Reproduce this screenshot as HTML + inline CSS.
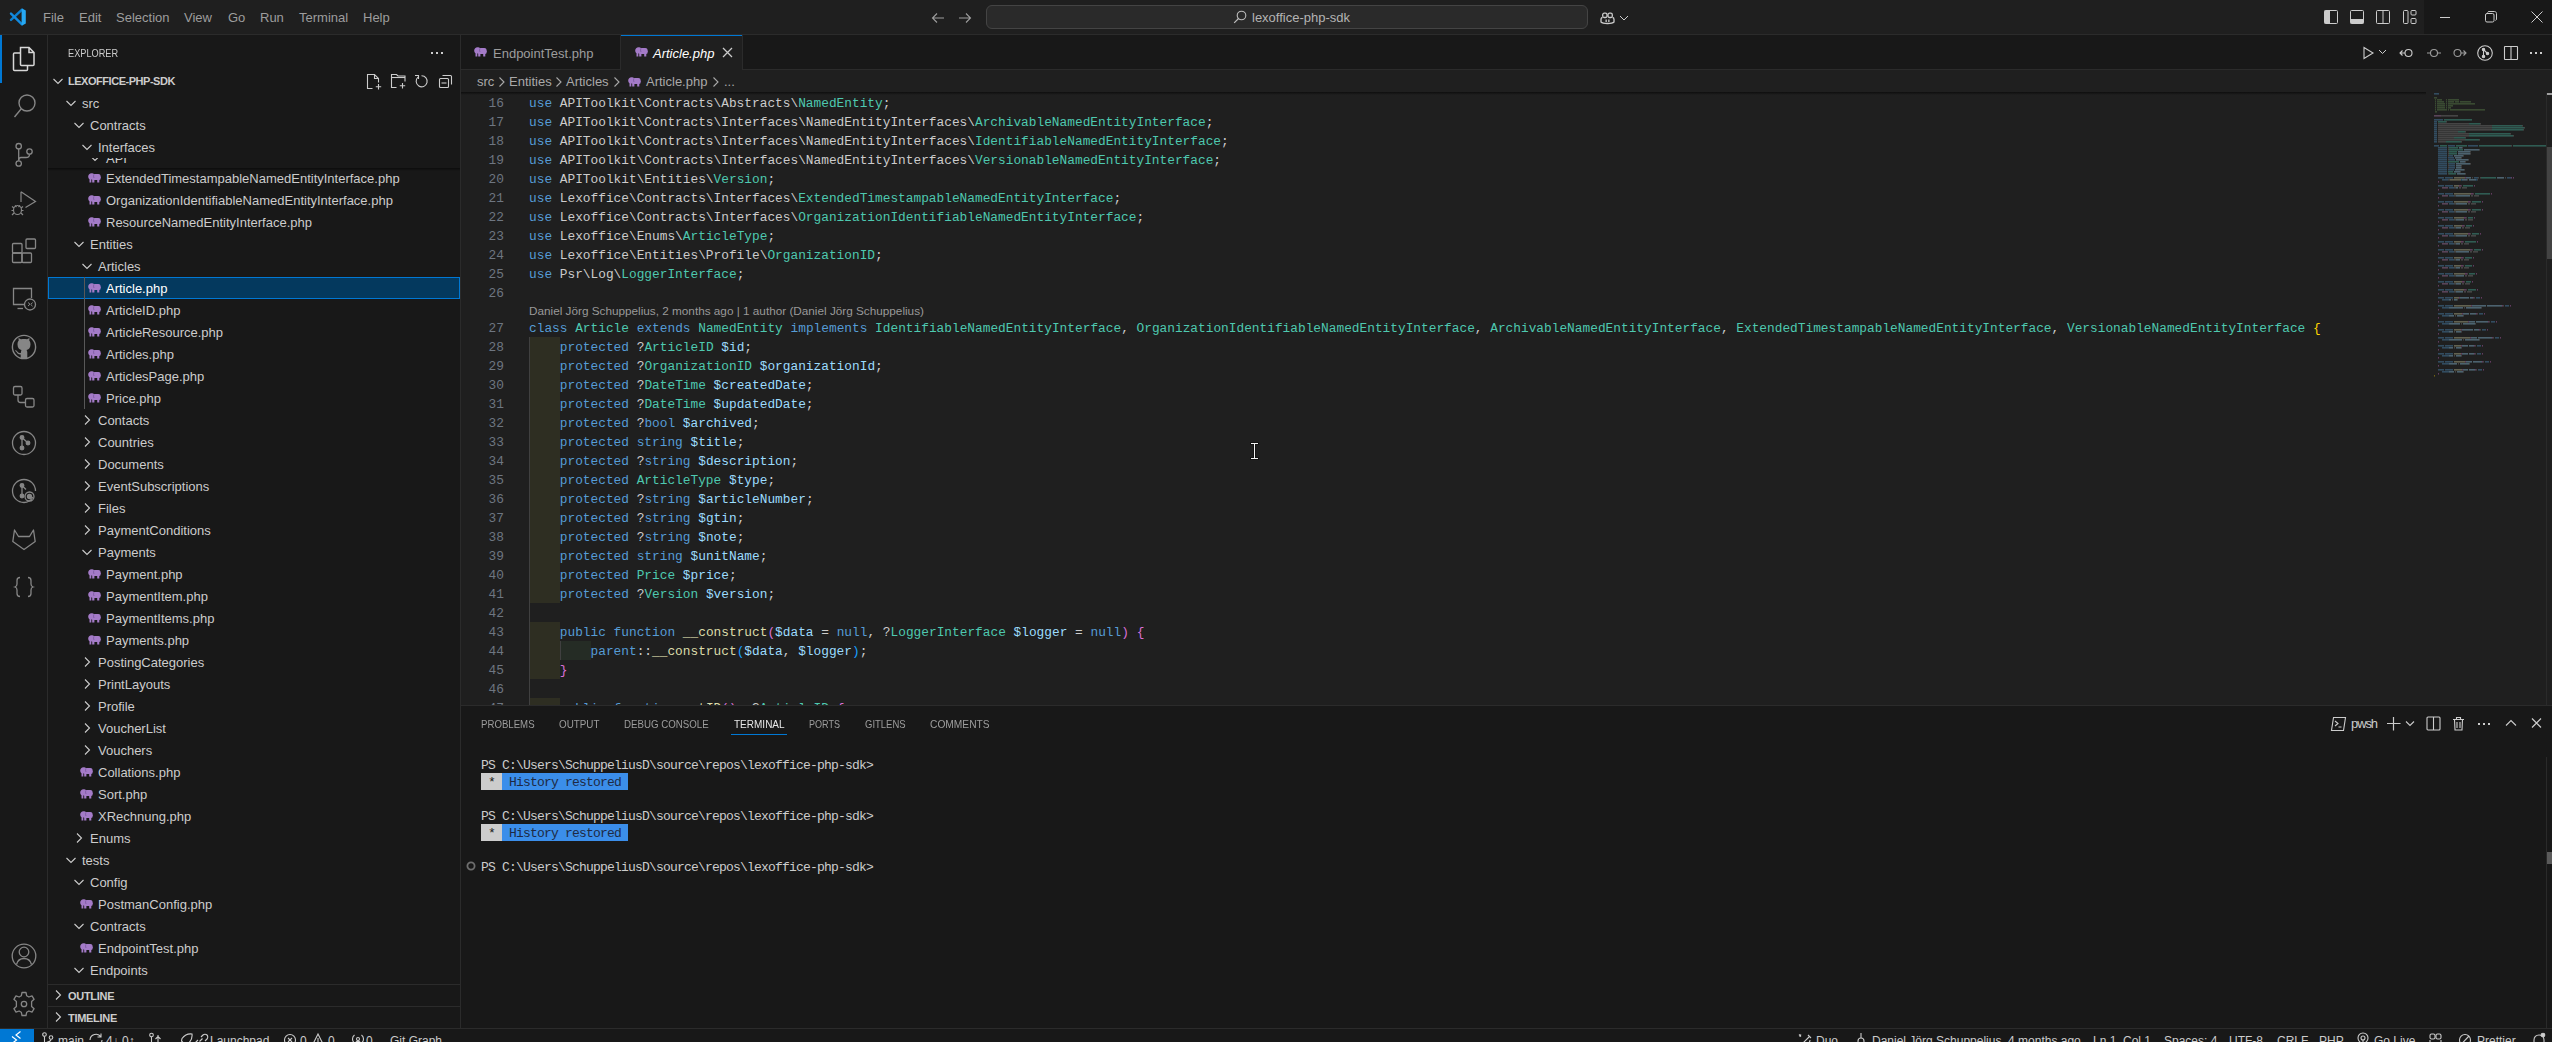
<!DOCTYPE html><html><head><meta charset="utf-8"><title>VS Code</title><style>
*{margin:0;padding:0;box-sizing:border-box}
html,body{width:2552px;height:1042px;overflow:hidden;background:#181818}
body{position:relative;font-family:"Liberation Sans",sans-serif;color:#cccccc;font-size:13px}
.a{position:absolute}
.t{position:absolute;white-space:pre;line-height:22px;height:22px;padding-top:1px}
.code{position:absolute;white-space:pre;font-family:"Liberation Mono",monospace;font-size:12.824px;line-height:19px;height:19px}
.term{position:absolute;white-space:pre;font-family:"Liberation Mono",monospace;font-size:13px;letter-spacing:-0.8003px;line-height:17px;height:17px}
svg{position:absolute;overflow:visible}
</style></head><body>
<div class="a" style="left:0;top:0;width:2424px;height:34px;background:#1f1f1f"></div>
<div class="a" style="left:2424px;top:0;width:128px;height:34px;background:#181818"></div>
<div class="a" style="left:0;top:34px;width:2552px;height:1px;background:#2b2b2b"></div>
<svg style="left:0;top:0" width="40" height="34" viewBox="0 0 40 34"><path d="M22 9.6L11 19.9" stroke="#0c7fcf" stroke-width="2.4" stroke-linecap="round"/><path d="M22 24.4L11 13.6" stroke="#138be0" stroke-width="2.4" stroke-linecap="round"/><path d="M21.6 9.2L22.6 8.8 25.8 10.6V23.6L22.6 25.2 21.6 24.8Z" fill="#26a9f4"/></svg>
<div class="t" style="left:43px;top:6px;color:#9d9d9d;font-size:13px">File</div>
<div class="t" style="left:79px;top:6px;color:#9d9d9d;font-size:13px">Edit</div>
<div class="t" style="left:116px;top:6px;color:#9d9d9d;font-size:13px">Selection</div>
<div class="t" style="left:184px;top:6px;color:#9d9d9d;font-size:13px">View</div>
<div class="t" style="left:228px;top:6px;color:#9d9d9d;font-size:13px">Go</div>
<div class="t" style="left:260px;top:6px;color:#9d9d9d;font-size:13px">Run</div>
<div class="t" style="left:299px;top:6px;color:#9d9d9d;font-size:13px">Terminal</div>
<div class="t" style="left:363px;top:6px;color:#9d9d9d;font-size:13px">Help</div>
<svg style="left:930px;top:10px" width="16" height="16" viewBox="0 0 16 16"><path d="M14 8H2.5M7 3.5L2.5 8 7 12.5" stroke="#9d9d9d" stroke-width="1.1" fill="none"/></svg>
<svg style="left:957px;top:10px" width="16" height="16" viewBox="0 0 16 16"><path d="M2 8H13.5M9 3.5L13.5 8 9 12.5" stroke="#9d9d9d" stroke-width="1.1" fill="none"/></svg>
<div class="a" style="left:986px;top:5px;width:602px;height:24px;background:#2a2a2a;border:1px solid #444444;border-radius:6px"></div>
<svg style="left:1232px;top:9px" width="16" height="16" viewBox="0 0 16 16"><circle cx="9.5" cy="6.5" r="4.3" stroke="#bdbdbd" stroke-width="1.1" fill="none"/><path d="M6.5 9.5L2.2 13.8" stroke="#bdbdbd" stroke-width="1.2"/></svg>
<div class="t" style="left:1252px;top:6px;color:#b4b4b4">lexoffice-php-sdk</div>
<svg style="left:1599px;top:10.5px" width="17" height="16" viewBox="0 0 16 16"><path d="M3 6.5C2 6.5 1.5 7.5 1.5 8.5V11C3.5 13 12.5 13 14.5 11V8.5C14.5 7.5 14 6.5 13 6.5" stroke="#cccccc" stroke-width="1.3" fill="none"/><rect x="3.2" y="2.2" width="4.3" height="4.3" rx="1.5" stroke="#cccccc" stroke-width="1.3" fill="none"/><rect x="8.5" y="2.2" width="4.3" height="4.3" rx="1.5" stroke="#cccccc" stroke-width="1.3" fill="none"/><rect x="6" y="8.5" width="1.3" height="2.5" fill="#cccccc"/><rect x="8.7" y="8.5" width="1.3" height="2.5" fill="#cccccc"/></svg>
<svg style="left:1619px;top:14px" width="10" height="8" viewBox="0 0 10 8"><path d="M1 2L5 6 9 2" stroke="#cccccc" stroke-width="1" fill="none"/></svg>
<svg style="left:2323px;top:9px" width="16" height="16" viewBox="0 0 16 16"><rect x="1.5" y="1.5" width="13" height="13" rx="1" stroke="#cccccc" fill="none"/><rect x="1.5" y="1.5" width="5.5" height="13" fill="#cccccc"/></svg>
<svg style="left:2349px;top:9px" width="16" height="16" viewBox="0 0 16 16"><rect x="1.5" y="1.5" width="13" height="13" rx="1" stroke="#cccccc" fill="none"/><rect x="1.5" y="10" width="13" height="4.5" fill="#cccccc"/></svg>
<svg style="left:2375px;top:9px" width="16" height="16" viewBox="0 0 16 16"><rect x="1.5" y="1.5" width="13" height="13" rx="1" stroke="#cccccc" fill="none"/><path d="M8 1.5V14.5" stroke="#cccccc"/></svg>
<svg style="left:2402px;top:9px" width="16" height="16" viewBox="0 0 16 16"><rect x="1.5" y="1.5" width="4.5" height="13" rx="1" stroke="#cccccc" fill="none"/><rect x="9" y="1.5" width="5" height="4.5" rx="1" stroke="#cccccc" fill="none"/><rect x="9" y="9.5" width="5" height="5" rx="1" stroke="#cccccc" fill="none"/></svg>
<div class="a" style="left:2440px;top:17px;width:10px;height:1px;background:#cccccc"></div>
<svg style="left:2485px;top:11px" width="12" height="12" viewBox="0 0 12 12"><rect x="0.5" y="2.5" width="8.5" height="8.5" rx="1.5" stroke="#cccccc" fill="none"/><path d="M2.5 1.5C2.8 0.8 3.3 0.5 4 0.5H9.5C10.6 0.5 11.5 1.4 11.5 2.5V8C11.5 8.7 11.2 9.2 10.5 9.5" stroke="#cccccc" fill="none"/></svg>
<svg style="left:2531px;top:11px" width="12" height="12" viewBox="0 0 12 12"><path d="M0.5 0.5L11.5 11.5M11.5 0.5L0.5 11.5" stroke="#cccccc" stroke-width="1"/></svg>
<div class="a" style="left:47px;top:35px;width:1px;height:993px;background:#2b2b2b"></div>
<div class="a" style="left:0;top:35px;width:2px;height:48px;background:#0078d4"></div>
<svg style="left:0;top:35px" width="48" height="48" viewBox="0 0 48 48"><g stroke="#d7d7d7" stroke-width="1.5" fill="none"><path d="M20.5 12.5H29L34 17.5V29.5C34 30.1 33.6 30.5 33 30.5H21.5C20.9 30.5 20.5 30.1 20.5 29.5Z M29 12.5V17.5H34"/><path d="M20.5 18H14.5C13.9 18 13.5 18.4 13.5 19V34.5C13.5 35.1 13.9 35.5 14.5 35.5H26.5C27.1 35.5 27.5 35.1 27.5 34.5V30.5"/></g></svg>
<svg style="left:0;top:83px" width="48" height="48" viewBox="0 0 48 48"><g stroke="#868686" stroke-width="1.4" fill="none"><circle cx="27" cy="20" r="8"/><path d="M21.3 25.8L14.5 34"/></g></svg>
<svg style="left:0;top:131px" width="48" height="48" viewBox="0 0 48 48"><g stroke="#868686" stroke-width="1.3" fill="none"><circle cx="18.7" cy="15.2" r="2.7"/><circle cx="29.5" cy="20.5" r="2.7"/><circle cx="18.7" cy="32.5" r="2.7"/><path d="M18.7 18V29.8"/><path d="M29.5 23.2C29.5 25.5 28 26.5 26 26.5H21C19.5 26.5 18.7 27.3 18.7 29"/></g></svg>
<svg style="left:0;top:179px" width="48" height="48" viewBox="0 0 48 48"><g stroke="#868686" stroke-width="1.2" fill="none"><path d="M21 12.8V23M21 12.8L35.5 22.5 25.5 28.5"/><ellipse cx="17.5" cy="31" rx="4" ry="4.5"/><path d="M12 27.5L14 29M23 27.5L21 29M11.5 31.5H13.5M23.5 31.5H21.5M12 36L14 34M23 36L21 34M15 26.5L16.5 28M20 26.5L18.5 28"/></g></svg>
<svg style="left:0;top:227px" width="48" height="48" viewBox="0 0 48 48"><g stroke="#868686" stroke-width="1.3" fill="none"><rect x="12.5" y="16.5" width="9.5" height="9.5" rx="1"/><rect x="12.5" y="26" width="9.5" height="9.5" rx="1"/><rect x="22" y="26" width="9.5" height="9.5" rx="1"/><rect x="26" y="12" width="9.5" height="9.5" rx="1"/></g></svg>
<svg style="left:0;top:275px" width="48" height="48" viewBox="0 0 48 48"><g stroke="#868686" stroke-width="1.3" fill="none"><path d="M31.5 23V13.5H13.5V29.5H25"/><path d="M17.5 33.5H23"/><circle cx="30" cy="29.5" r="5.5"/><path d="M28 27.5L30 29.2 28 31M32.5 27.5L30.8 29.5 32.5 31.2" stroke-width="1"/></g></svg>
<svg style="left:0;top:323px" width="48" height="48" viewBox="0 0 48 48"><g stroke="#868686" stroke-width="1.4" fill="none"><circle cx="24" cy="24" r="11.6"/></g><path d="M17.5 21.5C17.5 19.5 18 18.5 18.7 17.8L18.5 15 21 16.3C23 15.8 25 15.8 27 16.3L29.5 15 29.3 17.8C30 18.5 30.5 19.5 30.5 21.5C30.5 25 28.5 26.5 26.5 27C27 27.6 27.3 28.5 27.3 29.5V35.3C25.3 35.8 22.7 35.8 20.7 35.3V31.5C18.5 31.8 17.3 30.5 16.5 29C16 28.2 15.5 28 15 28L15.3 27.3C16.5 27.3 17.2 28.3 17.8 29.1C18.5 30 19.5 30.3 20.8 29.9C21 29 21.2 27.6 21.5 27C19.5 26.5 17.5 25 17.5 21.5Z" fill="#868686"/></svg>
<svg style="left:0;top:371px" width="48" height="48" viewBox="0 0 48 48"><g stroke="#868686" stroke-width="1.3" fill="none"><rect x="13.5" y="15.5" width="8.5" height="8.5" rx="1.5"/><rect x="25.5" y="27.5" width="8.5" height="8.5" rx="1.5"/><path d="M18 24V29C18 30.5 19 31.5 20.5 31.5H25.5"/></g></svg>
<svg style="left:0;top:419px" width="48" height="48" viewBox="0 0 48 48"><g stroke="#868686" stroke-width="1.3" fill="none"><circle cx="24" cy="24" r="11.5"/><circle cx="22" cy="18.5" r="1.8" fill="#868686"/><circle cx="28" cy="24" r="1.8" fill="#868686"/><circle cx="22" cy="29" r="1.8" fill="#868686"/><path d="M22 18.5V29M22 18.5L28 24"/></g></svg>
<svg style="left:0;top:467px" width="48" height="48" viewBox="0 0 48 48"><g stroke="#868686" stroke-width="1.3" fill="none"><path d="M33 30C31 33.5 27.5 35.5 24 35.5C17.6 35.5 12.5 30.4 12.5 24S17.6 12.5 24 12.5C30.4 12.5 35.5 17.6 35.5 24"/><circle cx="22" cy="18.5" r="1.8" fill="#868686"/><circle cx="22" cy="29" r="1.8" fill="#868686"/><path d="M22 18.5V29M22 18.5L26 22.5"/><circle cx="29.5" cy="29.5" r="4.5"/><circle cx="29.5" cy="29.5" r="2" fill="#868686"/></g></svg>
<svg style="left:0;top:515px" width="48" height="48" viewBox="0 0 48 48"><g stroke="#868686" stroke-width="1.3" fill="none"><path d="M24 34.5L12.8 26.5L14.5 15L18.5 21.5H29.5L33.5 15L35.2 26.5Z" stroke-linejoin="round"/></g></svg>
<svg style="left:0;top:563px" width="48" height="48" viewBox="0 0 48 48"><g stroke="#868686" stroke-width="1.3" fill="none"><path d="M20 14.5C17.5 14.5 17 15.5 17 17.5V21C17 22.5 16.5 23.5 15 24C16.5 24.5 17 25.5 17 27V30.5C17 32.5 17.5 33.5 20 33.5"/><path d="M28 14.5C30.5 14.5 31 15.5 31 17.5V21C31 22.5 31.5 23.5 33 24C31.5 24.5 31 25.5 31 27V30.5C31 32.5 30.5 33.5 28 33.5"/></g></svg>
<svg style="left:0;top:932px" width="48" height="48" viewBox="0 0 48 48"><g stroke="#868686" stroke-width="1.3" fill="none"><circle cx="24" cy="24" r="11.8"/><circle cx="24" cy="20" r="4.8"/><path d="M16.5 32.5C17.5 28.5 20.5 26.5 24 26.5S30.5 28.5 31.5 32.5"/></g></svg>
<svg style="left:0;top:980px" width="48" height="48" viewBox="0 0 48 48"><g stroke="#868686" stroke-width="1.3" fill="none"><path d="M22 12.5H26L26.7 15.8 28.9 17 32 15.8 34.1 19.3 31.6 21.6V26.4L34.1 28.7 32 32.2 28.9 31 26.7 32.2 26 35.5H22L21.3 32.2 19.1 31 16 32.2 13.9 28.7 16.4 26.4V21.6L13.9 19.3 16 15.8 19.1 17 21.3 15.8Z" stroke-linejoin="round"/><circle cx="24" cy="24" r="2.7"/></g></svg>
<div class="a" style="left:460px;top:35px;width:1px;height:993px;background:#2b2b2b"></div>
<div class="t" style="left:68px;top:41px;font-size:11px;color:#cccccc;transform:scaleX(0.835);transform-origin:0 0">EXPLORER</div>
<div class="a" style="left:431px;top:52px;width:2px;height:2px;background:#cccccc"></div>
<div class="a" style="left:436px;top:52px;width:2px;height:2px;background:#cccccc"></div>
<div class="a" style="left:441px;top:52px;width:2px;height:2px;background:#cccccc"></div>
<svg style="left:50px;top:73px" width="16" height="16" viewBox="0 0 16 16"><path d="M3.5 6L8 10.5 12.5 6" stroke="#cccccc" stroke-width="1.1" fill="none"/></svg>
<div class="t" style="left:68px;top:69px;font-size:11px;font-weight:bold;letter-spacing:-0.47px">LEXOFFICE-PHP-SDK</div>
<svg style="left:366px;top:73px" width="17" height="17" viewBox="0 0 17 17"><g stroke="#cccccc" stroke-width="1.1" fill="none"><path d="M6.5 15.5H1.5V1.5H8.5L12.5 5.5V9.5M8.5 1.5V5.5H12.5"/><path d="M12.5 11V16.5M9.8 13.7H15.2"/></g></svg>
<svg style="left:390px;top:73px" width="17" height="17" viewBox="0 0 17 17"><g stroke="#cccccc" stroke-width="1.1" fill="none"><path d="M6.5 14.5H1.5V1.5H6.5L8 3H15V8.5"/><path d="M1.5 4.5H15"/><path d="M12.5 10V15.5M9.8 12.7H15.2"/></g></svg>
<svg style="left:414px;top:74px" width="15" height="15" viewBox="0 0 15 15"><g stroke="#cccccc" stroke-width="1.1" fill="none"><path d="M4 3.2A5.5 5.5 0 1 0 7.5 1.8"/><path d="M1 1.5H4.5V5"/></g></svg>
<svg style="left:438px;top:74px" width="15" height="15" viewBox="0 0 15 15"><g stroke="#cccccc" stroke-width="1.1" fill="none"><rect x="1.5" y="4.5" width="9" height="9" rx="1"/><path d="M4.5 1.5H12.5C13.1 1.5 13.5 1.9 13.5 2.5V10.5"/><path d="M3.5 9H8.5"/></g></svg>
<div class="a" style="left:48px;top:92px;width:412px;height:892px;overflow:hidden">
<div class="a" style="left:-48px;top:-92px;width:2552px;height:1042px"><svg style="left:88px;top:173px" width="13" height="10" viewBox="0 0 13 10"><path fill="#a47bc8" d="M1.5 9.4V6.2C0.6 5.6 0.2 4.6 0.2 3.5C0.2 1.5 1.7 0.2 3.5 0.2C4.7 0.2 5.5 0.6 6 1.1H10.4C11.7 1.1 12.5 2 12.6 3.2L13 4.6 12.6 4.9V6C12.6 6.5 12 6.8 11.3 6.9V9.4H9.2V7.1H6.4V9.4H4.2V6.7L3.3 6.3V9.4Z"/><path d="M6 1.3C5.4 2.6 5.4 4 6.1 5" stroke="#6f4f93" stroke-width="0.7" fill="none"/></svg><div class="t" style="left:106px;top:167px;color:#cccccc">ExtendedTimestampableNamedEntityInterface.php</div><svg style="left:88px;top:195px" width="13" height="10" viewBox="0 0 13 10"><path fill="#a47bc8" d="M1.5 9.4V6.2C0.6 5.6 0.2 4.6 0.2 3.5C0.2 1.5 1.7 0.2 3.5 0.2C4.7 0.2 5.5 0.6 6 1.1H10.4C11.7 1.1 12.5 2 12.6 3.2L13 4.6 12.6 4.9V6C12.6 6.5 12 6.8 11.3 6.9V9.4H9.2V7.1H6.4V9.4H4.2V6.7L3.3 6.3V9.4Z"/><path d="M6 1.3C5.4 2.6 5.4 4 6.1 5" stroke="#6f4f93" stroke-width="0.7" fill="none"/></svg><div class="t" style="left:106px;top:189px;color:#cccccc">OrganizationIdentifiableNamedEntityInterface.php</div><svg style="left:88px;top:217px" width="13" height="10" viewBox="0 0 13 10"><path fill="#a47bc8" d="M1.5 9.4V6.2C0.6 5.6 0.2 4.6 0.2 3.5C0.2 1.5 1.7 0.2 3.5 0.2C4.7 0.2 5.5 0.6 6 1.1H10.4C11.7 1.1 12.5 2 12.6 3.2L13 4.6 12.6 4.9V6C12.6 6.5 12 6.8 11.3 6.9V9.4H9.2V7.1H6.4V9.4H4.2V6.7L3.3 6.3V9.4Z"/><path d="M6 1.3C5.4 2.6 5.4 4 6.1 5" stroke="#6f4f93" stroke-width="0.7" fill="none"/></svg><div class="t" style="left:106px;top:211px;color:#cccccc">ResourceNamedEntityInterface.php</div><svg style="left:71px;top:236px" width="16" height="16" viewBox="0 0 16 16"><path d="M3.5 6L8 10.5 12.5 6" stroke="#cccccc" stroke-width="1.1" fill="none"/></svg><div class="t" style="left:90px;top:233px;color:#cccccc">Entities</div><svg style="left:79px;top:258px" width="16" height="16" viewBox="0 0 16 16"><path d="M3.5 6L8 10.5 12.5 6" stroke="#cccccc" stroke-width="1.1" fill="none"/></svg><div class="t" style="left:98px;top:255px;color:#cccccc">Articles</div><div class="a" style="left:48px;top:277px;width:412px;height:22px;background:#04395e;border:1px solid #0078d4"></div><svg style="left:88px;top:283px" width="13" height="10" viewBox="0 0 13 10"><path fill="#a47bc8" d="M1.5 9.4V6.2C0.6 5.6 0.2 4.6 0.2 3.5C0.2 1.5 1.7 0.2 3.5 0.2C4.7 0.2 5.5 0.6 6 1.1H10.4C11.7 1.1 12.5 2 12.6 3.2L13 4.6 12.6 4.9V6C12.6 6.5 12 6.8 11.3 6.9V9.4H9.2V7.1H6.4V9.4H4.2V6.7L3.3 6.3V9.4Z"/><path d="M6 1.3C5.4 2.6 5.4 4 6.1 5" stroke="#6f4f93" stroke-width="0.7" fill="none"/></svg><div class="t" style="left:106px;top:277px;color:#ffffff">Article.php</div><svg style="left:88px;top:305px" width="13" height="10" viewBox="0 0 13 10"><path fill="#a47bc8" d="M1.5 9.4V6.2C0.6 5.6 0.2 4.6 0.2 3.5C0.2 1.5 1.7 0.2 3.5 0.2C4.7 0.2 5.5 0.6 6 1.1H10.4C11.7 1.1 12.5 2 12.6 3.2L13 4.6 12.6 4.9V6C12.6 6.5 12 6.8 11.3 6.9V9.4H9.2V7.1H6.4V9.4H4.2V6.7L3.3 6.3V9.4Z"/><path d="M6 1.3C5.4 2.6 5.4 4 6.1 5" stroke="#6f4f93" stroke-width="0.7" fill="none"/></svg><div class="t" style="left:106px;top:299px;color:#cccccc">ArticleID.php</div><svg style="left:88px;top:327px" width="13" height="10" viewBox="0 0 13 10"><path fill="#a47bc8" d="M1.5 9.4V6.2C0.6 5.6 0.2 4.6 0.2 3.5C0.2 1.5 1.7 0.2 3.5 0.2C4.7 0.2 5.5 0.6 6 1.1H10.4C11.7 1.1 12.5 2 12.6 3.2L13 4.6 12.6 4.9V6C12.6 6.5 12 6.8 11.3 6.9V9.4H9.2V7.1H6.4V9.4H4.2V6.7L3.3 6.3V9.4Z"/><path d="M6 1.3C5.4 2.6 5.4 4 6.1 5" stroke="#6f4f93" stroke-width="0.7" fill="none"/></svg><div class="t" style="left:106px;top:321px;color:#cccccc">ArticleResource.php</div><svg style="left:88px;top:349px" width="13" height="10" viewBox="0 0 13 10"><path fill="#a47bc8" d="M1.5 9.4V6.2C0.6 5.6 0.2 4.6 0.2 3.5C0.2 1.5 1.7 0.2 3.5 0.2C4.7 0.2 5.5 0.6 6 1.1H10.4C11.7 1.1 12.5 2 12.6 3.2L13 4.6 12.6 4.9V6C12.6 6.5 12 6.8 11.3 6.9V9.4H9.2V7.1H6.4V9.4H4.2V6.7L3.3 6.3V9.4Z"/><path d="M6 1.3C5.4 2.6 5.4 4 6.1 5" stroke="#6f4f93" stroke-width="0.7" fill="none"/></svg><div class="t" style="left:106px;top:343px;color:#cccccc">Articles.php</div><svg style="left:88px;top:371px" width="13" height="10" viewBox="0 0 13 10"><path fill="#a47bc8" d="M1.5 9.4V6.2C0.6 5.6 0.2 4.6 0.2 3.5C0.2 1.5 1.7 0.2 3.5 0.2C4.7 0.2 5.5 0.6 6 1.1H10.4C11.7 1.1 12.5 2 12.6 3.2L13 4.6 12.6 4.9V6C12.6 6.5 12 6.8 11.3 6.9V9.4H9.2V7.1H6.4V9.4H4.2V6.7L3.3 6.3V9.4Z"/><path d="M6 1.3C5.4 2.6 5.4 4 6.1 5" stroke="#6f4f93" stroke-width="0.7" fill="none"/></svg><div class="t" style="left:106px;top:365px;color:#cccccc">ArticlesPage.php</div><svg style="left:88px;top:393px" width="13" height="10" viewBox="0 0 13 10"><path fill="#a47bc8" d="M1.5 9.4V6.2C0.6 5.6 0.2 4.6 0.2 3.5C0.2 1.5 1.7 0.2 3.5 0.2C4.7 0.2 5.5 0.6 6 1.1H10.4C11.7 1.1 12.5 2 12.6 3.2L13 4.6 12.6 4.9V6C12.6 6.5 12 6.8 11.3 6.9V9.4H9.2V7.1H6.4V9.4H4.2V6.7L3.3 6.3V9.4Z"/><path d="M6 1.3C5.4 2.6 5.4 4 6.1 5" stroke="#6f4f93" stroke-width="0.7" fill="none"/></svg><div class="t" style="left:106px;top:387px;color:#cccccc">Price.php</div><svg style="left:79px;top:412px" width="16" height="16" viewBox="0 0 16 16"><path d="M6 3.5L10.5 8 6 12.5" stroke="#cccccc" stroke-width="1.1" fill="none"/></svg><div class="t" style="left:98px;top:409px;color:#cccccc">Contacts</div><svg style="left:79px;top:434px" width="16" height="16" viewBox="0 0 16 16"><path d="M6 3.5L10.5 8 6 12.5" stroke="#cccccc" stroke-width="1.1" fill="none"/></svg><div class="t" style="left:98px;top:431px;color:#cccccc">Countries</div><svg style="left:79px;top:456px" width="16" height="16" viewBox="0 0 16 16"><path d="M6 3.5L10.5 8 6 12.5" stroke="#cccccc" stroke-width="1.1" fill="none"/></svg><div class="t" style="left:98px;top:453px;color:#cccccc">Documents</div><svg style="left:79px;top:478px" width="16" height="16" viewBox="0 0 16 16"><path d="M6 3.5L10.5 8 6 12.5" stroke="#cccccc" stroke-width="1.1" fill="none"/></svg><div class="t" style="left:98px;top:475px;color:#cccccc">EventSubscriptions</div><svg style="left:79px;top:500px" width="16" height="16" viewBox="0 0 16 16"><path d="M6 3.5L10.5 8 6 12.5" stroke="#cccccc" stroke-width="1.1" fill="none"/></svg><div class="t" style="left:98px;top:497px;color:#cccccc">Files</div><svg style="left:79px;top:522px" width="16" height="16" viewBox="0 0 16 16"><path d="M6 3.5L10.5 8 6 12.5" stroke="#cccccc" stroke-width="1.1" fill="none"/></svg><div class="t" style="left:98px;top:519px;color:#cccccc">PaymentConditions</div><svg style="left:79px;top:544px" width="16" height="16" viewBox="0 0 16 16"><path d="M3.5 6L8 10.5 12.5 6" stroke="#cccccc" stroke-width="1.1" fill="none"/></svg><div class="t" style="left:98px;top:541px;color:#cccccc">Payments</div><svg style="left:88px;top:569px" width="13" height="10" viewBox="0 0 13 10"><path fill="#a47bc8" d="M1.5 9.4V6.2C0.6 5.6 0.2 4.6 0.2 3.5C0.2 1.5 1.7 0.2 3.5 0.2C4.7 0.2 5.5 0.6 6 1.1H10.4C11.7 1.1 12.5 2 12.6 3.2L13 4.6 12.6 4.9V6C12.6 6.5 12 6.8 11.3 6.9V9.4H9.2V7.1H6.4V9.4H4.2V6.7L3.3 6.3V9.4Z"/><path d="M6 1.3C5.4 2.6 5.4 4 6.1 5" stroke="#6f4f93" stroke-width="0.7" fill="none"/></svg><div class="t" style="left:106px;top:563px;color:#cccccc">Payment.php</div><svg style="left:88px;top:591px" width="13" height="10" viewBox="0 0 13 10"><path fill="#a47bc8" d="M1.5 9.4V6.2C0.6 5.6 0.2 4.6 0.2 3.5C0.2 1.5 1.7 0.2 3.5 0.2C4.7 0.2 5.5 0.6 6 1.1H10.4C11.7 1.1 12.5 2 12.6 3.2L13 4.6 12.6 4.9V6C12.6 6.5 12 6.8 11.3 6.9V9.4H9.2V7.1H6.4V9.4H4.2V6.7L3.3 6.3V9.4Z"/><path d="M6 1.3C5.4 2.6 5.4 4 6.1 5" stroke="#6f4f93" stroke-width="0.7" fill="none"/></svg><div class="t" style="left:106px;top:585px;color:#cccccc">PaymentItem.php</div><svg style="left:88px;top:613px" width="13" height="10" viewBox="0 0 13 10"><path fill="#a47bc8" d="M1.5 9.4V6.2C0.6 5.6 0.2 4.6 0.2 3.5C0.2 1.5 1.7 0.2 3.5 0.2C4.7 0.2 5.5 0.6 6 1.1H10.4C11.7 1.1 12.5 2 12.6 3.2L13 4.6 12.6 4.9V6C12.6 6.5 12 6.8 11.3 6.9V9.4H9.2V7.1H6.4V9.4H4.2V6.7L3.3 6.3V9.4Z"/><path d="M6 1.3C5.4 2.6 5.4 4 6.1 5" stroke="#6f4f93" stroke-width="0.7" fill="none"/></svg><div class="t" style="left:106px;top:607px;color:#cccccc">PaymentItems.php</div><svg style="left:88px;top:635px" width="13" height="10" viewBox="0 0 13 10"><path fill="#a47bc8" d="M1.5 9.4V6.2C0.6 5.6 0.2 4.6 0.2 3.5C0.2 1.5 1.7 0.2 3.5 0.2C4.7 0.2 5.5 0.6 6 1.1H10.4C11.7 1.1 12.5 2 12.6 3.2L13 4.6 12.6 4.9V6C12.6 6.5 12 6.8 11.3 6.9V9.4H9.2V7.1H6.4V9.4H4.2V6.7L3.3 6.3V9.4Z"/><path d="M6 1.3C5.4 2.6 5.4 4 6.1 5" stroke="#6f4f93" stroke-width="0.7" fill="none"/></svg><div class="t" style="left:106px;top:629px;color:#cccccc">Payments.php</div><svg style="left:79px;top:654px" width="16" height="16" viewBox="0 0 16 16"><path d="M6 3.5L10.5 8 6 12.5" stroke="#cccccc" stroke-width="1.1" fill="none"/></svg><div class="t" style="left:98px;top:651px;color:#cccccc">PostingCategories</div><svg style="left:79px;top:676px" width="16" height="16" viewBox="0 0 16 16"><path d="M6 3.5L10.5 8 6 12.5" stroke="#cccccc" stroke-width="1.1" fill="none"/></svg><div class="t" style="left:98px;top:673px;color:#cccccc">PrintLayouts</div><svg style="left:79px;top:698px" width="16" height="16" viewBox="0 0 16 16"><path d="M6 3.5L10.5 8 6 12.5" stroke="#cccccc" stroke-width="1.1" fill="none"/></svg><div class="t" style="left:98px;top:695px;color:#cccccc">Profile</div><svg style="left:79px;top:720px" width="16" height="16" viewBox="0 0 16 16"><path d="M6 3.5L10.5 8 6 12.5" stroke="#cccccc" stroke-width="1.1" fill="none"/></svg><div class="t" style="left:98px;top:717px;color:#cccccc">VoucherList</div><svg style="left:79px;top:742px" width="16" height="16" viewBox="0 0 16 16"><path d="M6 3.5L10.5 8 6 12.5" stroke="#cccccc" stroke-width="1.1" fill="none"/></svg><div class="t" style="left:98px;top:739px;color:#cccccc">Vouchers</div><svg style="left:80px;top:767px" width="13" height="10" viewBox="0 0 13 10"><path fill="#a47bc8" d="M1.5 9.4V6.2C0.6 5.6 0.2 4.6 0.2 3.5C0.2 1.5 1.7 0.2 3.5 0.2C4.7 0.2 5.5 0.6 6 1.1H10.4C11.7 1.1 12.5 2 12.6 3.2L13 4.6 12.6 4.9V6C12.6 6.5 12 6.8 11.3 6.9V9.4H9.2V7.1H6.4V9.4H4.2V6.7L3.3 6.3V9.4Z"/><path d="M6 1.3C5.4 2.6 5.4 4 6.1 5" stroke="#6f4f93" stroke-width="0.7" fill="none"/></svg><div class="t" style="left:98px;top:761px;color:#cccccc">Collations.php</div><svg style="left:80px;top:789px" width="13" height="10" viewBox="0 0 13 10"><path fill="#a47bc8" d="M1.5 9.4V6.2C0.6 5.6 0.2 4.6 0.2 3.5C0.2 1.5 1.7 0.2 3.5 0.2C4.7 0.2 5.5 0.6 6 1.1H10.4C11.7 1.1 12.5 2 12.6 3.2L13 4.6 12.6 4.9V6C12.6 6.5 12 6.8 11.3 6.9V9.4H9.2V7.1H6.4V9.4H4.2V6.7L3.3 6.3V9.4Z"/><path d="M6 1.3C5.4 2.6 5.4 4 6.1 5" stroke="#6f4f93" stroke-width="0.7" fill="none"/></svg><div class="t" style="left:98px;top:783px;color:#cccccc">Sort.php</div><svg style="left:80px;top:811px" width="13" height="10" viewBox="0 0 13 10"><path fill="#a47bc8" d="M1.5 9.4V6.2C0.6 5.6 0.2 4.6 0.2 3.5C0.2 1.5 1.7 0.2 3.5 0.2C4.7 0.2 5.5 0.6 6 1.1H10.4C11.7 1.1 12.5 2 12.6 3.2L13 4.6 12.6 4.9V6C12.6 6.5 12 6.8 11.3 6.9V9.4H9.2V7.1H6.4V9.4H4.2V6.7L3.3 6.3V9.4Z"/><path d="M6 1.3C5.4 2.6 5.4 4 6.1 5" stroke="#6f4f93" stroke-width="0.7" fill="none"/></svg><div class="t" style="left:98px;top:805px;color:#cccccc">XRechnung.php</div><svg style="left:71px;top:830px" width="16" height="16" viewBox="0 0 16 16"><path d="M6 3.5L10.5 8 6 12.5" stroke="#cccccc" stroke-width="1.1" fill="none"/></svg><div class="t" style="left:90px;top:827px;color:#cccccc">Enums</div><svg style="left:63px;top:852px" width="16" height="16" viewBox="0 0 16 16"><path d="M3.5 6L8 10.5 12.5 6" stroke="#cccccc" stroke-width="1.1" fill="none"/></svg><div class="t" style="left:82px;top:849px;color:#cccccc">tests</div><svg style="left:71px;top:874px" width="16" height="16" viewBox="0 0 16 16"><path d="M3.5 6L8 10.5 12.5 6" stroke="#cccccc" stroke-width="1.1" fill="none"/></svg><div class="t" style="left:90px;top:871px;color:#cccccc">Config</div><svg style="left:80px;top:899px" width="13" height="10" viewBox="0 0 13 10"><path fill="#a47bc8" d="M1.5 9.4V6.2C0.6 5.6 0.2 4.6 0.2 3.5C0.2 1.5 1.7 0.2 3.5 0.2C4.7 0.2 5.5 0.6 6 1.1H10.4C11.7 1.1 12.5 2 12.6 3.2L13 4.6 12.6 4.9V6C12.6 6.5 12 6.8 11.3 6.9V9.4H9.2V7.1H6.4V9.4H4.2V6.7L3.3 6.3V9.4Z"/><path d="M6 1.3C5.4 2.6 5.4 4 6.1 5" stroke="#6f4f93" stroke-width="0.7" fill="none"/></svg><div class="t" style="left:98px;top:893px;color:#cccccc">PostmanConfig.php</div><svg style="left:71px;top:918px" width="16" height="16" viewBox="0 0 16 16"><path d="M3.5 6L8 10.5 12.5 6" stroke="#cccccc" stroke-width="1.1" fill="none"/></svg><div class="t" style="left:90px;top:915px;color:#cccccc">Contracts</div><svg style="left:80px;top:943px" width="13" height="10" viewBox="0 0 13 10"><path fill="#a47bc8" d="M1.5 9.4V6.2C0.6 5.6 0.2 4.6 0.2 3.5C0.2 1.5 1.7 0.2 3.5 0.2C4.7 0.2 5.5 0.6 6 1.1H10.4C11.7 1.1 12.5 2 12.6 3.2L13 4.6 12.6 4.9V6C12.6 6.5 12 6.8 11.3 6.9V9.4H9.2V7.1H6.4V9.4H4.2V6.7L3.3 6.3V9.4Z"/><path d="M6 1.3C5.4 2.6 5.4 4 6.1 5" stroke="#6f4f93" stroke-width="0.7" fill="none"/></svg><div class="t" style="left:98px;top:937px;color:#cccccc">EndpointTest.php</div><svg style="left:71px;top:962px" width="16" height="16" viewBox="0 0 16 16"><path d="M3.5 6L8 10.5 12.5 6" stroke="#cccccc" stroke-width="1.1" fill="none"/></svg><div class="t" style="left:90px;top:959px;color:#cccccc">Endpoints</div>
<div class="a" style="left:84px;top:277px;width:1px;height:132px;background:#585858"></div>
<div class="a" style="left:48px;top:92px;width:412px;height:76px;background:#181818"></div>
<svg style="left:63px;top:95px" width="16" height="16" viewBox="0 0 16 16"><path d="M3.5 6L8 10.5 12.5 6" stroke="#cccccc" stroke-width="1.1" fill="none"/></svg><div class="t" style="left:82px;top:92px;color:#cccccc">src</div>
<svg style="left:71px;top:117px" width="16" height="16" viewBox="0 0 16 16"><path d="M3.5 6L8 10.5 12.5 6" stroke="#cccccc" stroke-width="1.1" fill="none"/></svg><div class="t" style="left:90px;top:114px;color:#cccccc">Contracts</div>
<svg style="left:79px;top:139px" width="16" height="16" viewBox="0 0 16 16"><path d="M3.5 6L8 10.5 12.5 6" stroke="#cccccc" stroke-width="1.1" fill="none"/></svg><div class="t" style="left:98px;top:136px;color:#cccccc">Interfaces</div>
<div class="a" style="left:0;top:157.5px;width:2552px;height:5px;overflow:hidden"><div class="a" style="left:0;top:-157.5px;width:2552px;height:400px"><svg style="left:87px;top:149.5px" width="16" height="16" viewBox="0 0 16 16"><path d="M3.5 6L8 10.5 12.5 6" stroke="#cccccc" stroke-width="1.1" fill="none"/></svg><div class="t" style="left:106px;top:146.5px;color:#cccccc">API</div></div></div>
</div>
<div class="a" style="left:0;top:76px;width:412px;height:3px;background:linear-gradient(#0c0c0c,rgba(24,24,24,0))"></div>
</div>
<div class="a" style="left:48px;top:984px;width:412px;height:1px;background:#2b2b2b"></div>
<div class="a" style="left:48px;top:1006px;width:412px;height:1px;background:#2b2b2b"></div>
<svg style="left:50px;top:987px" width="16" height="16" viewBox="0 0 16 16"><path d="M6 3.5L10.5 8 6 12.5" stroke="#cccccc" stroke-width="1.1" fill="none"/></svg>
<div class="t" style="left:68px;top:984px;font-size:11px;font-weight:bold;letter-spacing:-0.3px">OUTLINE</div>
<svg style="left:50px;top:1009px" width="16" height="16" viewBox="0 0 16 16"><path d="M6 3.5L10.5 8 6 12.5" stroke="#cccccc" stroke-width="1.1" fill="none"/></svg>
<div class="t" style="left:68px;top:1006px;font-size:11px;font-weight:bold;letter-spacing:-0.3px">TIMELINE</div>
<div class="a" style="left:461px;top:35px;width:2091px;height:670px;background:#1f1f1f"></div>
<div class="a" style="left:461px;top:35px;width:2091px;height:35px;background:#181818"></div>
<div class="a" style="left:461px;top:69px;width:2091px;height:1px;background:#2b2b2b"></div>
<div class="a" style="left:620px;top:35px;width:1px;height:34px;background:#2b2b2b"></div>
<svg style="left:474px;top:47px" width="13" height="10" viewBox="0 0 13 10"><path fill="#a47bc8" d="M1.5 9.4V6.2C0.6 5.6 0.2 4.6 0.2 3.5C0.2 1.5 1.7 0.2 3.5 0.2C4.7 0.2 5.5 0.6 6 1.1H10.4C11.7 1.1 12.5 2 12.6 3.2L13 4.6 12.6 4.9V6C12.6 6.5 12 6.8 11.3 6.9V9.4H9.2V7.1H6.4V9.4H4.2V6.7L3.3 6.3V9.4Z"/><path d="M6 1.3C5.4 2.6 5.4 4 6.1 5" stroke="#6f4f93" stroke-width="0.7" fill="none"/></svg>
<div class="t" style="left:493px;top:42px;color:#9d9d9d">EndpointTest.php</div>
<div class="a" style="left:621px;top:35px;width:121px;height:35px;background:#1f1f1f"></div>
<div class="a" style="left:621px;top:35px;width:121px;height:1px;background:#0078d4"></div>
<div class="a" style="left:742px;top:35px;width:1px;height:34px;background:#2b2b2b"></div>
<svg style="left:635px;top:47px" width="13" height="10" viewBox="0 0 13 10"><path fill="#a47bc8" d="M1.5 9.4V6.2C0.6 5.6 0.2 4.6 0.2 3.5C0.2 1.5 1.7 0.2 3.5 0.2C4.7 0.2 5.5 0.6 6 1.1H10.4C11.7 1.1 12.5 2 12.6 3.2L13 4.6 12.6 4.9V6C12.6 6.5 12 6.8 11.3 6.9V9.4H9.2V7.1H6.4V9.4H4.2V6.7L3.3 6.3V9.4Z"/><path d="M6 1.3C5.4 2.6 5.4 4 6.1 5" stroke="#6f4f93" stroke-width="0.7" fill="none"/></svg>
<div class="t" style="left:653px;top:42px;color:#ffffff;font-style:italic">Article.php</div>
<svg style="left:722px;top:47px" width="11" height="11" viewBox="0 0 11 11"><path d="M1 1L10 10M10 1L1 10" stroke="#cccccc" stroke-width="1.3"/></svg>
<svg style="left:2360px;top:45px" width="16" height="16" viewBox="0 0 16 16"><g stroke="#cccccc" stroke-width="1.1" fill="none"><path d="M4 2.5L13 8 4 13.5Z"/></g></svg>
<svg style="left:2378px;top:48px" width="9" height="8" viewBox="0 0 9 8"><path d="M1 2L4.5 5.5 8 2" stroke="#cccccc" fill="none"/></svg>
<svg style="left:2399px;top:45px" width="16" height="16" viewBox="0 0 16 16"><g stroke="#cccccc" stroke-width="1.1" fill="none"><circle cx="9.5" cy="8" r="3.5"/><path d="M6 8H1M3.5 5.5L1 8 3.5 10.5"/></g></svg>
<svg style="left:2426px;top:45px" width="16" height="16" viewBox="0 0 16 16"><g stroke="#cccccc" stroke-width="1.1" fill="none"><circle cx="8" cy="8" r="3.5" stroke="#9d9d9d"/><path d="M1 8H4.5M11.5 8H15" stroke="#9d9d9d"/></g></svg>
<svg style="left:2451px;top:45px" width="16" height="16" viewBox="0 0 16 16"><g stroke="#cccccc" stroke-width="1.1" fill="none"><circle cx="6.5" cy="8" r="3.5" stroke="#9d9d9d"/><path d="M10 8H15M12.5 5.5L15 8 12.5 10.5" stroke="#9d9d9d"/></g></svg>
<svg style="left:2477px;top:45px" width="16" height="16" viewBox="0 0 16 16"><g stroke="#cccccc" stroke-width="1.1" fill="none"><circle cx="8" cy="8" r="7.3"/><circle cx="6.5" cy="4.5" r="1.2" fill="#cccccc"/><circle cx="10.5" cy="8.5" r="1.2" fill="#cccccc"/><circle cx="6.5" cy="11.5" r="1.2" fill="#cccccc"/><path d="M6.5 4.5V11.5M6.5 4.5L10.5 8.5"/></g></svg>
<svg style="left:2503px;top:45px" width="16" height="16" viewBox="0 0 16 16"><g stroke="#cccccc" stroke-width="1.1" fill="none"><rect x="1.5" y="1.5" width="13" height="13" rx="0.5"/><path d="M8 1.5V14.5"/></g></svg>
<div class="a" style="left:2530px;top:52px;width:2px;height:2px;background:#cccccc"></div>
<div class="a" style="left:2535px;top:52px;width:2px;height:2px;background:#cccccc"></div>
<div class="a" style="left:2540px;top:52px;width:2px;height:2px;background:#cccccc"></div>
<div class="t" style="left:477px;top:70px;color:#a9a9a9">src</div>
<svg style="left:492.5px;top:74px" width="16" height="16" viewBox="0 0 16 16"><path d="M6.5 3.5L11 8 6.5 12.5" stroke="#a9a9a9" stroke-width="1.1" fill="none"/></svg>
<div class="t" style="left:509px;top:70px;color:#a9a9a9">Entities</div>
<svg style="left:549.5px;top:74px" width="16" height="16" viewBox="0 0 16 16"><path d="M6.5 3.5L11 8 6.5 12.5" stroke="#a9a9a9" stroke-width="1.1" fill="none"/></svg>
<div class="t" style="left:566px;top:70px;color:#a9a9a9">Articles</div>
<svg style="left:608px;top:74px" width="16" height="16" viewBox="0 0 16 16"><path d="M6.5 3.5L11 8 6.5 12.5" stroke="#a9a9a9" stroke-width="1.1" fill="none"/></svg>
<svg style="left:628px;top:77px" width="13" height="10" viewBox="0 0 13 10"><path fill="#a47bc8" d="M1.5 9.4V6.2C0.6 5.6 0.2 4.6 0.2 3.5C0.2 1.5 1.7 0.2 3.5 0.2C4.7 0.2 5.5 0.6 6 1.1H10.4C11.7 1.1 12.5 2 12.6 3.2L13 4.6 12.6 4.9V6C12.6 6.5 12 6.8 11.3 6.9V9.4H9.2V7.1H6.4V9.4H4.2V6.7L3.3 6.3V9.4Z"/><path d="M6 1.3C5.4 2.6 5.4 4 6.1 5" stroke="#6f4f93" stroke-width="0.7" fill="none"/></svg>
<div class="t" style="left:646px;top:70px;color:#a9a9a9">Article.php</div>
<svg style="left:707px;top:74px" width="16" height="16" viewBox="0 0 16 16"><path d="M6.5 3.5L11 8 6.5 12.5" stroke="#a9a9a9" stroke-width="1.1" fill="none"/></svg>
<div class="t" style="left:724px;top:70px;color:#a9a9a9">...</div>
<div class="a" style="left:461px;top:92px;width:1965px;height:3px;background:linear-gradient(#0e0e0e,rgba(31,31,31,0))"></div>
<div class="a" style="left:461px;top:93px;width:1970px;height:612px;overflow:hidden">
<div class="a" style="left:-461px;top:-93px;width:2552px;height:1042px">
<div class="a" style="left:529.00px;top:337px;width:30.78px;height:19px;background:#2e2e22"></div>
<div class="a" style="left:529.00px;top:356px;width:30.78px;height:19px;background:#2e2e22"></div>
<div class="a" style="left:529.00px;top:375px;width:30.78px;height:19px;background:#2e2e22"></div>
<div class="a" style="left:529.00px;top:394px;width:30.78px;height:19px;background:#2e2e22"></div>
<div class="a" style="left:529.00px;top:413px;width:30.78px;height:19px;background:#2e2e22"></div>
<div class="a" style="left:529.00px;top:432px;width:30.78px;height:19px;background:#2e2e22"></div>
<div class="a" style="left:529.00px;top:451px;width:30.78px;height:19px;background:#2e2e22"></div>
<div class="a" style="left:529.00px;top:470px;width:30.78px;height:19px;background:#2e2e22"></div>
<div class="a" style="left:529.00px;top:489px;width:30.78px;height:19px;background:#2e2e22"></div>
<div class="a" style="left:529.00px;top:508px;width:30.78px;height:19px;background:#2e2e22"></div>
<div class="a" style="left:529.00px;top:527px;width:30.78px;height:19px;background:#2e2e22"></div>
<div class="a" style="left:529.00px;top:546px;width:30.78px;height:19px;background:#2e2e22"></div>
<div class="a" style="left:529.00px;top:565px;width:30.78px;height:19px;background:#2e2e22"></div>
<div class="a" style="left:529.00px;top:584px;width:30.78px;height:19px;background:#2e2e22"></div>
<div class="a" style="left:529.00px;top:622px;width:30.78px;height:19px;background:#2e2e22"></div>
<div class="a" style="left:529.00px;top:641px;width:30.78px;height:19px;background:#2e2e22"></div>
<div class="a" style="left:529.00px;top:660px;width:30.78px;height:19px;background:#2e2e22"></div>
<div class="a" style="left:529.00px;top:698px;width:30.78px;height:19px;background:#2e2e22"></div>
<div class="a" style="left:559.78px;top:641px;width:30.78px;height:19px;background:#252c25"></div>
<div class="a" style="left:529px;top:337px;width:1px;height:380px;background:#404040"></div>
<div class="a" style="left:559.78px;top:641px;width:1px;height:19px;background:#404040"></div>
<div class="a" style="left:461px;top:93px;width:43px;height:19px;text-align:right;font-family:'Liberation Mono',monospace;font-size:12.824px;line-height:19px;color:#6e7681;padding-top:1px">16</div>
<div class="code" style="left:529px;top:93px;padding-top:1px"><span style="color:#569cd6">use</span><span style="color:#cccccc"> </span><span style="color:#cccccc">APIToolkit\Contracts\Abstracts\</span><span style="color:#4ec9b0">NamedEntity</span><span style="color:#cccccc">;</span></div>
<div class="a" style="left:461px;top:112px;width:43px;height:19px;text-align:right;font-family:'Liberation Mono',monospace;font-size:12.824px;line-height:19px;color:#6e7681;padding-top:1px">17</div>
<div class="code" style="left:529px;top:112px;padding-top:1px"><span style="color:#569cd6">use</span><span style="color:#cccccc"> </span><span style="color:#cccccc">APIToolkit\Contracts\Interfaces\NamedEntityInterfaces\</span><span style="color:#4ec9b0">ArchivableNamedEntityInterface</span><span style="color:#cccccc">;</span></div>
<div class="a" style="left:461px;top:131px;width:43px;height:19px;text-align:right;font-family:'Liberation Mono',monospace;font-size:12.824px;line-height:19px;color:#6e7681;padding-top:1px">18</div>
<div class="code" style="left:529px;top:131px;padding-top:1px"><span style="color:#569cd6">use</span><span style="color:#cccccc"> </span><span style="color:#cccccc">APIToolkit\Contracts\Interfaces\NamedEntityInterfaces\</span><span style="color:#4ec9b0">IdentifiableNamedEntityInterface</span><span style="color:#cccccc">;</span></div>
<div class="a" style="left:461px;top:150px;width:43px;height:19px;text-align:right;font-family:'Liberation Mono',monospace;font-size:12.824px;line-height:19px;color:#6e7681;padding-top:1px">19</div>
<div class="code" style="left:529px;top:150px;padding-top:1px"><span style="color:#569cd6">use</span><span style="color:#cccccc"> </span><span style="color:#cccccc">APIToolkit\Contracts\Interfaces\NamedEntityInterfaces\</span><span style="color:#4ec9b0">VersionableNamedEntityInterface</span><span style="color:#cccccc">;</span></div>
<div class="a" style="left:461px;top:169px;width:43px;height:19px;text-align:right;font-family:'Liberation Mono',monospace;font-size:12.824px;line-height:19px;color:#6e7681;padding-top:1px">20</div>
<div class="code" style="left:529px;top:169px;padding-top:1px"><span style="color:#569cd6">use</span><span style="color:#cccccc"> </span><span style="color:#cccccc">APIToolkit\Entities\</span><span style="color:#4ec9b0">Version</span><span style="color:#cccccc">;</span></div>
<div class="a" style="left:461px;top:188px;width:43px;height:19px;text-align:right;font-family:'Liberation Mono',monospace;font-size:12.824px;line-height:19px;color:#6e7681;padding-top:1px">21</div>
<div class="code" style="left:529px;top:188px;padding-top:1px"><span style="color:#569cd6">use</span><span style="color:#cccccc"> </span><span style="color:#cccccc">Lexoffice\Contracts\Interfaces\</span><span style="color:#4ec9b0">ExtendedTimestampableNamedEntityInterface</span><span style="color:#cccccc">;</span></div>
<div class="a" style="left:461px;top:207px;width:43px;height:19px;text-align:right;font-family:'Liberation Mono',monospace;font-size:12.824px;line-height:19px;color:#6e7681;padding-top:1px">22</div>
<div class="code" style="left:529px;top:207px;padding-top:1px"><span style="color:#569cd6">use</span><span style="color:#cccccc"> </span><span style="color:#cccccc">Lexoffice\Contracts\Interfaces\</span><span style="color:#4ec9b0">OrganizationIdentifiableNamedEntityInterface</span><span style="color:#cccccc">;</span></div>
<div class="a" style="left:461px;top:226px;width:43px;height:19px;text-align:right;font-family:'Liberation Mono',monospace;font-size:12.824px;line-height:19px;color:#6e7681;padding-top:1px">23</div>
<div class="code" style="left:529px;top:226px;padding-top:1px"><span style="color:#569cd6">use</span><span style="color:#cccccc"> </span><span style="color:#cccccc">Lexoffice\Enums\</span><span style="color:#4ec9b0">ArticleType</span><span style="color:#cccccc">;</span></div>
<div class="a" style="left:461px;top:245px;width:43px;height:19px;text-align:right;font-family:'Liberation Mono',monospace;font-size:12.824px;line-height:19px;color:#6e7681;padding-top:1px">24</div>
<div class="code" style="left:529px;top:245px;padding-top:1px"><span style="color:#569cd6">use</span><span style="color:#cccccc"> </span><span style="color:#cccccc">Lexoffice\Entities\Profile\</span><span style="color:#4ec9b0">OrganizationID</span><span style="color:#cccccc">;</span></div>
<div class="a" style="left:461px;top:264px;width:43px;height:19px;text-align:right;font-family:'Liberation Mono',monospace;font-size:12.824px;line-height:19px;color:#6e7681;padding-top:1px">25</div>
<div class="code" style="left:529px;top:264px;padding-top:1px"><span style="color:#569cd6">use</span><span style="color:#cccccc"> </span><span style="color:#cccccc">Psr\Log\</span><span style="color:#4ec9b0">LoggerInterface</span><span style="color:#cccccc">;</span></div>
<div class="a" style="left:461px;top:283px;width:43px;height:19px;text-align:right;font-family:'Liberation Mono',monospace;font-size:12.824px;line-height:19px;color:#6e7681;padding-top:1px">26</div>
<div class="a" style="left:461px;top:318px;width:43px;height:19px;text-align:right;font-family:'Liberation Mono',monospace;font-size:12.824px;line-height:19px;color:#6e7681;padding-top:1px">27</div>
<div class="code" style="left:529px;top:318px;padding-top:1px"><span style="color:#569cd6">class</span><span style="color:#cccccc"> </span><span style="color:#4ec9b0">Article</span><span style="color:#cccccc"> </span><span style="color:#569cd6">extends</span><span style="color:#cccccc"> </span><span style="color:#4ec9b0">NamedEntity</span><span style="color:#cccccc"> </span><span style="color:#569cd6">implements</span><span style="color:#cccccc"> </span><span style="color:#4ec9b0">IdentifiableNamedEntityInterface</span><span style="color:#cccccc">, </span><span style="color:#4ec9b0">OrganizationIdentifiableNamedEntityInterface</span><span style="color:#cccccc">, </span><span style="color:#4ec9b0">ArchivableNamedEntityInterface</span><span style="color:#cccccc">, </span><span style="color:#4ec9b0">ExtendedTimestampableNamedEntityInterface</span><span style="color:#cccccc">, </span><span style="color:#4ec9b0">VersionableNamedEntityInterface</span><span style="color:#cccccc"> </span><span style="color:#ffd700">{</span></div>
<div class="a" style="left:461px;top:337px;width:43px;height:19px;text-align:right;font-family:'Liberation Mono',monospace;font-size:12.824px;line-height:19px;color:#6e7681;padding-top:1px">28</div>
<div class="code" style="left:529px;top:337px;padding-top:1px"><span style="color:#cccccc">    </span><span style="color:#569cd6">protected</span><span style="color:#cccccc"> </span><span style="color:#cccccc">?</span><span style="color:#4ec9b0">ArticleID</span><span style="color:#cccccc"> </span><span style="color:#9cdcfe">$id</span><span style="color:#cccccc">;</span></div>
<div class="a" style="left:461px;top:356px;width:43px;height:19px;text-align:right;font-family:'Liberation Mono',monospace;font-size:12.824px;line-height:19px;color:#6e7681;padding-top:1px">29</div>
<div class="code" style="left:529px;top:356px;padding-top:1px"><span style="color:#cccccc">    </span><span style="color:#569cd6">protected</span><span style="color:#cccccc"> </span><span style="color:#cccccc">?</span><span style="color:#4ec9b0">OrganizationID</span><span style="color:#cccccc"> </span><span style="color:#9cdcfe">$organizationId</span><span style="color:#cccccc">;</span></div>
<div class="a" style="left:461px;top:375px;width:43px;height:19px;text-align:right;font-family:'Liberation Mono',monospace;font-size:12.824px;line-height:19px;color:#6e7681;padding-top:1px">30</div>
<div class="code" style="left:529px;top:375px;padding-top:1px"><span style="color:#cccccc">    </span><span style="color:#569cd6">protected</span><span style="color:#cccccc"> </span><span style="color:#cccccc">?</span><span style="color:#4ec9b0">DateTime</span><span style="color:#cccccc"> </span><span style="color:#9cdcfe">$createdDate</span><span style="color:#cccccc">;</span></div>
<div class="a" style="left:461px;top:394px;width:43px;height:19px;text-align:right;font-family:'Liberation Mono',monospace;font-size:12.824px;line-height:19px;color:#6e7681;padding-top:1px">31</div>
<div class="code" style="left:529px;top:394px;padding-top:1px"><span style="color:#cccccc">    </span><span style="color:#569cd6">protected</span><span style="color:#cccccc"> </span><span style="color:#cccccc">?</span><span style="color:#4ec9b0">DateTime</span><span style="color:#cccccc"> </span><span style="color:#9cdcfe">$updatedDate</span><span style="color:#cccccc">;</span></div>
<div class="a" style="left:461px;top:413px;width:43px;height:19px;text-align:right;font-family:'Liberation Mono',monospace;font-size:12.824px;line-height:19px;color:#6e7681;padding-top:1px">32</div>
<div class="code" style="left:529px;top:413px;padding-top:1px"><span style="color:#cccccc">    </span><span style="color:#569cd6">protected</span><span style="color:#cccccc"> </span><span style="color:#cccccc">?</span><span style="color:#569cd6">bool</span><span style="color:#cccccc"> </span><span style="color:#9cdcfe">$archived</span><span style="color:#cccccc">;</span></div>
<div class="a" style="left:461px;top:432px;width:43px;height:19px;text-align:right;font-family:'Liberation Mono',monospace;font-size:12.824px;line-height:19px;color:#6e7681;padding-top:1px">33</div>
<div class="code" style="left:529px;top:432px;padding-top:1px"><span style="color:#cccccc">    </span><span style="color:#569cd6">protected</span><span style="color:#cccccc"> </span><span style="color:#569cd6">string</span><span style="color:#cccccc"> </span><span style="color:#9cdcfe">$title</span><span style="color:#cccccc">;</span></div>
<div class="a" style="left:461px;top:451px;width:43px;height:19px;text-align:right;font-family:'Liberation Mono',monospace;font-size:12.824px;line-height:19px;color:#6e7681;padding-top:1px">34</div>
<div class="code" style="left:529px;top:451px;padding-top:1px"><span style="color:#cccccc">    </span><span style="color:#569cd6">protected</span><span style="color:#cccccc"> </span><span style="color:#cccccc">?</span><span style="color:#569cd6">string</span><span style="color:#cccccc"> </span><span style="color:#9cdcfe">$description</span><span style="color:#cccccc">;</span></div>
<div class="a" style="left:461px;top:470px;width:43px;height:19px;text-align:right;font-family:'Liberation Mono',monospace;font-size:12.824px;line-height:19px;color:#6e7681;padding-top:1px">35</div>
<div class="code" style="left:529px;top:470px;padding-top:1px"><span style="color:#cccccc">    </span><span style="color:#569cd6">protected</span><span style="color:#cccccc"> </span><span style="color:#4ec9b0">ArticleType</span><span style="color:#cccccc"> </span><span style="color:#9cdcfe">$type</span><span style="color:#cccccc">;</span></div>
<div class="a" style="left:461px;top:489px;width:43px;height:19px;text-align:right;font-family:'Liberation Mono',monospace;font-size:12.824px;line-height:19px;color:#6e7681;padding-top:1px">36</div>
<div class="code" style="left:529px;top:489px;padding-top:1px"><span style="color:#cccccc">    </span><span style="color:#569cd6">protected</span><span style="color:#cccccc"> </span><span style="color:#cccccc">?</span><span style="color:#569cd6">string</span><span style="color:#cccccc"> </span><span style="color:#9cdcfe">$articleNumber</span><span style="color:#cccccc">;</span></div>
<div class="a" style="left:461px;top:508px;width:43px;height:19px;text-align:right;font-family:'Liberation Mono',monospace;font-size:12.824px;line-height:19px;color:#6e7681;padding-top:1px">37</div>
<div class="code" style="left:529px;top:508px;padding-top:1px"><span style="color:#cccccc">    </span><span style="color:#569cd6">protected</span><span style="color:#cccccc"> </span><span style="color:#cccccc">?</span><span style="color:#569cd6">string</span><span style="color:#cccccc"> </span><span style="color:#9cdcfe">$gtin</span><span style="color:#cccccc">;</span></div>
<div class="a" style="left:461px;top:527px;width:43px;height:19px;text-align:right;font-family:'Liberation Mono',monospace;font-size:12.824px;line-height:19px;color:#6e7681;padding-top:1px">38</div>
<div class="code" style="left:529px;top:527px;padding-top:1px"><span style="color:#cccccc">    </span><span style="color:#569cd6">protected</span><span style="color:#cccccc"> </span><span style="color:#cccccc">?</span><span style="color:#569cd6">string</span><span style="color:#cccccc"> </span><span style="color:#9cdcfe">$note</span><span style="color:#cccccc">;</span></div>
<div class="a" style="left:461px;top:546px;width:43px;height:19px;text-align:right;font-family:'Liberation Mono',monospace;font-size:12.824px;line-height:19px;color:#6e7681;padding-top:1px">39</div>
<div class="code" style="left:529px;top:546px;padding-top:1px"><span style="color:#cccccc">    </span><span style="color:#569cd6">protected</span><span style="color:#cccccc"> </span><span style="color:#569cd6">string</span><span style="color:#cccccc"> </span><span style="color:#9cdcfe">$unitName</span><span style="color:#cccccc">;</span></div>
<div class="a" style="left:461px;top:565px;width:43px;height:19px;text-align:right;font-family:'Liberation Mono',monospace;font-size:12.824px;line-height:19px;color:#6e7681;padding-top:1px">40</div>
<div class="code" style="left:529px;top:565px;padding-top:1px"><span style="color:#cccccc">    </span><span style="color:#569cd6">protected</span><span style="color:#cccccc"> </span><span style="color:#4ec9b0">Price</span><span style="color:#cccccc"> </span><span style="color:#9cdcfe">$price</span><span style="color:#cccccc">;</span></div>
<div class="a" style="left:461px;top:584px;width:43px;height:19px;text-align:right;font-family:'Liberation Mono',monospace;font-size:12.824px;line-height:19px;color:#6e7681;padding-top:1px">41</div>
<div class="code" style="left:529px;top:584px;padding-top:1px"><span style="color:#cccccc">    </span><span style="color:#569cd6">protected</span><span style="color:#cccccc"> </span><span style="color:#cccccc">?</span><span style="color:#4ec9b0">Version</span><span style="color:#cccccc"> </span><span style="color:#9cdcfe">$version</span><span style="color:#cccccc">;</span></div>
<div class="a" style="left:461px;top:603px;width:43px;height:19px;text-align:right;font-family:'Liberation Mono',monospace;font-size:12.824px;line-height:19px;color:#6e7681;padding-top:1px">42</div>
<div class="a" style="left:461px;top:622px;width:43px;height:19px;text-align:right;font-family:'Liberation Mono',monospace;font-size:12.824px;line-height:19px;color:#6e7681;padding-top:1px">43</div>
<div class="code" style="left:529px;top:622px;padding-top:1px"><span style="color:#cccccc">    </span><span style="color:#569cd6">public</span><span style="color:#cccccc"> </span><span style="color:#569cd6">function</span><span style="color:#cccccc"> </span><span style="color:#dcdcaa">__construct</span><span style="color:#da70d6">(</span><span style="color:#9cdcfe">$data</span><span style="color:#cccccc"> = </span><span style="color:#569cd6">null</span><span style="color:#cccccc">, </span><span style="color:#cccccc">?</span><span style="color:#4ec9b0">LoggerInterface</span><span style="color:#cccccc"> </span><span style="color:#9cdcfe">$logger</span><span style="color:#cccccc"> = </span><span style="color:#569cd6">null</span><span style="color:#da70d6">)</span><span style="color:#cccccc"> </span><span style="color:#da70d6">{</span></div>
<div class="a" style="left:461px;top:641px;width:43px;height:19px;text-align:right;font-family:'Liberation Mono',monospace;font-size:12.824px;line-height:19px;color:#6e7681;padding-top:1px">44</div>
<div class="code" style="left:529px;top:641px;padding-top:1px"><span style="color:#cccccc">        </span><span style="color:#569cd6">parent</span><span style="color:#cccccc">::</span><span style="color:#dcdcaa">__construct</span><span style="color:#179fff">(</span><span style="color:#9cdcfe">$data</span><span style="color:#cccccc">, </span><span style="color:#9cdcfe">$logger</span><span style="color:#179fff">)</span><span style="color:#cccccc">;</span></div>
<div class="a" style="left:461px;top:660px;width:43px;height:19px;text-align:right;font-family:'Liberation Mono',monospace;font-size:12.824px;line-height:19px;color:#6e7681;padding-top:1px">45</div>
<div class="code" style="left:529px;top:660px;padding-top:1px"><span style="color:#cccccc">    </span><span style="color:#da70d6">}</span></div>
<div class="a" style="left:461px;top:679px;width:43px;height:19px;text-align:right;font-family:'Liberation Mono',monospace;font-size:12.824px;line-height:19px;color:#6e7681;padding-top:1px">46</div>
<div class="a" style="left:461px;top:698px;width:43px;height:19px;text-align:right;font-family:'Liberation Mono',monospace;font-size:12.824px;line-height:19px;color:#6e7681;padding-top:1px">47</div>
<div class="code" style="left:529px;top:698px;padding-top:1px"><span style="color:#cccccc">    </span><span style="color:#569cd6">public</span><span style="color:#cccccc"> </span><span style="color:#569cd6">function</span><span style="color:#cccccc"> </span><span style="color:#dcdcaa">getID</span><span style="color:#da70d6">(</span><span style="color:#da70d6">)</span><span style="color:#cccccc">: </span><span style="color:#cccccc">?</span><span style="color:#4ec9b0">ArticleID</span><span style="color:#cccccc"> </span><span style="color:#da70d6">{</span></div>
<div class="t" style="left:529px;top:301px;height:16px;line-height:18px;font-size:11.75px;color:#999999">Daniel Jörg Schuppelius, 2 months ago | 1 author (Daniel Jörg Schuppelius)</div>
</div></div>
<div class="a" style="left:1250px;top:442px;width:9px;height:3px;background:#121212"></div>
<div class="a" style="left:1250px;top:457px;width:9px;height:3px;background:#121212"></div>
<div class="a" style="left:1253px;top:444px;width:3px;height:14px;background:#121212"></div>
<div class="a" style="left:1251px;top:443px;width:7px;height:1px;background:#f2f2f2"></div>
<div class="a" style="left:1251px;top:458px;width:7px;height:1px;background:#f2f2f2"></div>
<div class="a" style="left:1254px;top:444px;width:1px;height:14px;background:#f2f2f2"></div>
<svg style="left:2431px;top:93px" width="115" height="612" viewBox="0 0 115 612"><defs><pattern id="mmp" x="0" y="0" width="1" height="2" patternUnits="userSpaceOnUse"><rect x="0" y="0" width="0.85" height="1.6" fill="#fff"/></pattern><mask id="mmm"><rect x="0" y="0" width="115" height="612" fill="url(#mmp)"/></mask></defs><g opacity="0.42" mask="url(#mmm)"><rect x="3" y="0" width="5" height="2" fill="#569cd6"/><rect x="3" y="4" width="3" height="2" fill="#6a9955"/><rect x="4" y="6" width="1" height="2" fill="#6a9955"/><rect x="6" y="6" width="5" height="2" fill="#6a9955"/><rect x="15" y="6" width="1" height="2" fill="#6a9955"/><rect x="17" y="6" width="11" height="2" fill="#6a9955"/><rect x="4" y="8" width="1" height="2" fill="#6a9955"/><rect x="6" y="8" width="7" height="2" fill="#6a9955"/><rect x="15" y="8" width="1" height="2" fill="#6a9955"/><rect x="17" y="8" width="6" height="2" fill="#6a9955"/><rect x="24" y="8" width="4" height="2" fill="#6a9955"/><rect x="29" y="8" width="11" height="2" fill="#6a9955"/><rect x="4" y="10" width="1" height="2" fill="#6a9955"/><rect x="6" y="10" width="8" height="2" fill="#6a9955"/><rect x="15" y="10" width="1" height="2" fill="#6a9955"/><rect x="17" y="10" width="27" height="2" fill="#6a9955"/><rect x="4" y="12" width="1" height="2" fill="#6a9955"/><rect x="6" y="12" width="8" height="2" fill="#6a9955"/><rect x="15" y="12" width="1" height="2" fill="#6a9955"/><rect x="17" y="12" width="5" height="2" fill="#6a9955"/><rect x="4" y="14" width="1" height="2" fill="#6a9955"/><rect x="6" y="14" width="8" height="2" fill="#6a9955"/><rect x="15" y="14" width="1" height="2" fill="#6a9955"/><rect x="17" y="14" width="3" height="2" fill="#6a9955"/><rect x="4" y="16" width="1" height="2" fill="#6a9955"/><rect x="6" y="16" width="10" height="2" fill="#6a9955"/><rect x="17" y="16" width="1" height="2" fill="#6a9955"/><rect x="19" y="16" width="35" height="2" fill="#6a9955"/><rect x="4" y="18" width="2" height="2" fill="#6a9955"/><rect x="3" y="22" width="7" height="2" fill="#c586c0"/><rect x="10" y="22" width="17" height="2" fill="#8a8a8a"/><rect x="3" y="26" width="9" height="2" fill="#569cd6"/><rect x="13" y="26" width="28" height="2" fill="#4ec9b0"/><rect x="3" y="28" width="3" height="2" fill="#569cd6"/><rect x="7" y="28" width="8" height="2" fill="#4ec9b0"/><rect x="15" y="28" width="1" height="2" fill="#8a8a8a"/><rect x="3" y="30" width="3" height="2" fill="#569cd6"/><rect x="7" y="30" width="31" height="2" fill="#8a8a8a"/><rect x="38" y="30" width="11" height="2" fill="#4ec9b0"/><rect x="49" y="30" width="1" height="2" fill="#8a8a8a"/><rect x="3" y="32" width="3" height="2" fill="#569cd6"/><rect x="7" y="32" width="54" height="2" fill="#8a8a8a"/><rect x="61" y="32" width="30" height="2" fill="#4ec9b0"/><rect x="91" y="32" width="1" height="2" fill="#8a8a8a"/><rect x="3" y="34" width="3" height="2" fill="#569cd6"/><rect x="7" y="34" width="54" height="2" fill="#8a8a8a"/><rect x="61" y="34" width="32" height="2" fill="#4ec9b0"/><rect x="93" y="34" width="1" height="2" fill="#8a8a8a"/><rect x="3" y="36" width="3" height="2" fill="#569cd6"/><rect x="7" y="36" width="54" height="2" fill="#8a8a8a"/><rect x="61" y="36" width="31" height="2" fill="#4ec9b0"/><rect x="92" y="36" width="1" height="2" fill="#8a8a8a"/><rect x="3" y="38" width="3" height="2" fill="#569cd6"/><rect x="7" y="38" width="20" height="2" fill="#8a8a8a"/><rect x="27" y="38" width="7" height="2" fill="#4ec9b0"/><rect x="34" y="38" width="1" height="2" fill="#8a8a8a"/><rect x="3" y="40" width="3" height="2" fill="#569cd6"/><rect x="7" y="40" width="31" height="2" fill="#8a8a8a"/><rect x="38" y="40" width="41" height="2" fill="#4ec9b0"/><rect x="79" y="40" width="1" height="2" fill="#8a8a8a"/><rect x="3" y="42" width="3" height="2" fill="#569cd6"/><rect x="7" y="42" width="31" height="2" fill="#8a8a8a"/><rect x="38" y="42" width="44" height="2" fill="#4ec9b0"/><rect x="82" y="42" width="1" height="2" fill="#8a8a8a"/><rect x="3" y="44" width="3" height="2" fill="#569cd6"/><rect x="7" y="44" width="16" height="2" fill="#8a8a8a"/><rect x="23" y="44" width="11" height="2" fill="#4ec9b0"/><rect x="34" y="44" width="1" height="2" fill="#8a8a8a"/><rect x="3" y="46" width="3" height="2" fill="#569cd6"/><rect x="7" y="46" width="27" height="2" fill="#8a8a8a"/><rect x="34" y="46" width="14" height="2" fill="#4ec9b0"/><rect x="48" y="46" width="1" height="2" fill="#8a8a8a"/><rect x="3" y="48" width="3" height="2" fill="#569cd6"/><rect x="7" y="48" width="8" height="2" fill="#8a8a8a"/><rect x="15" y="48" width="15" height="2" fill="#4ec9b0"/><rect x="30" y="48" width="1" height="2" fill="#8a8a8a"/><rect x="3" y="52" width="5" height="2" fill="#569cd6"/><rect x="9" y="52" width="7" height="2" fill="#4ec9b0"/><rect x="17" y="52" width="7" height="2" fill="#569cd6"/><rect x="25" y="52" width="11" height="2" fill="#4ec9b0"/><rect x="37" y="52" width="10" height="2" fill="#569cd6"/><rect x="48" y="52" width="32" height="2" fill="#4ec9b0"/><rect x="80" y="52" width="1" height="2" fill="#8a8a8a"/><rect x="82" y="52" width="33" height="2" fill="#4ec9b0"/><rect x="7" y="54" width="9" height="2" fill="#569cd6"/><rect x="17" y="54" width="1" height="2" fill="#8a8a8a"/><rect x="18" y="54" width="9" height="2" fill="#4ec9b0"/><rect x="28" y="54" width="3" height="2" fill="#9cdcfe"/><rect x="31" y="54" width="1" height="2" fill="#8a8a8a"/><rect x="7" y="56" width="9" height="2" fill="#569cd6"/><rect x="17" y="56" width="1" height="2" fill="#8a8a8a"/><rect x="18" y="56" width="14" height="2" fill="#4ec9b0"/><rect x="33" y="56" width="15" height="2" fill="#9cdcfe"/><rect x="48" y="56" width="1" height="2" fill="#8a8a8a"/><rect x="7" y="58" width="9" height="2" fill="#569cd6"/><rect x="17" y="58" width="1" height="2" fill="#8a8a8a"/><rect x="18" y="58" width="8" height="2" fill="#4ec9b0"/><rect x="27" y="58" width="12" height="2" fill="#9cdcfe"/><rect x="39" y="58" width="1" height="2" fill="#8a8a8a"/><rect x="7" y="60" width="9" height="2" fill="#569cd6"/><rect x="17" y="60" width="1" height="2" fill="#8a8a8a"/><rect x="18" y="60" width="8" height="2" fill="#4ec9b0"/><rect x="27" y="60" width="12" height="2" fill="#9cdcfe"/><rect x="39" y="60" width="1" height="2" fill="#8a8a8a"/><rect x="7" y="62" width="9" height="2" fill="#569cd6"/><rect x="17" y="62" width="1" height="2" fill="#8a8a8a"/><rect x="18" y="62" width="4" height="2" fill="#569cd6"/><rect x="23" y="62" width="9" height="2" fill="#9cdcfe"/><rect x="32" y="62" width="1" height="2" fill="#8a8a8a"/><rect x="7" y="64" width="9" height="2" fill="#569cd6"/><rect x="17" y="64" width="6" height="2" fill="#569cd6"/><rect x="24" y="64" width="6" height="2" fill="#9cdcfe"/><rect x="30" y="64" width="1" height="2" fill="#8a8a8a"/><rect x="7" y="66" width="9" height="2" fill="#569cd6"/><rect x="17" y="66" width="1" height="2" fill="#8a8a8a"/><rect x="18" y="66" width="6" height="2" fill="#569cd6"/><rect x="25" y="66" width="12" height="2" fill="#9cdcfe"/><rect x="37" y="66" width="1" height="2" fill="#8a8a8a"/><rect x="7" y="68" width="9" height="2" fill="#569cd6"/><rect x="17" y="68" width="11" height="2" fill="#4ec9b0"/><rect x="29" y="68" width="5" height="2" fill="#9cdcfe"/><rect x="34" y="68" width="1" height="2" fill="#8a8a8a"/><rect x="7" y="70" width="9" height="2" fill="#569cd6"/><rect x="17" y="70" width="1" height="2" fill="#8a8a8a"/><rect x="18" y="70" width="6" height="2" fill="#569cd6"/><rect x="25" y="70" width="14" height="2" fill="#9cdcfe"/><rect x="39" y="70" width="1" height="2" fill="#8a8a8a"/><rect x="7" y="72" width="9" height="2" fill="#569cd6"/><rect x="17" y="72" width="1" height="2" fill="#8a8a8a"/><rect x="18" y="72" width="6" height="2" fill="#569cd6"/><rect x="25" y="72" width="5" height="2" fill="#9cdcfe"/><rect x="30" y="72" width="1" height="2" fill="#8a8a8a"/><rect x="7" y="74" width="9" height="2" fill="#569cd6"/><rect x="17" y="74" width="1" height="2" fill="#8a8a8a"/><rect x="18" y="74" width="6" height="2" fill="#569cd6"/><rect x="25" y="74" width="5" height="2" fill="#9cdcfe"/><rect x="30" y="74" width="1" height="2" fill="#8a8a8a"/><rect x="7" y="76" width="9" height="2" fill="#569cd6"/><rect x="17" y="76" width="6" height="2" fill="#569cd6"/><rect x="24" y="76" width="9" height="2" fill="#9cdcfe"/><rect x="33" y="76" width="1" height="2" fill="#8a8a8a"/><rect x="7" y="78" width="9" height="2" fill="#569cd6"/><rect x="17" y="78" width="5" height="2" fill="#4ec9b0"/><rect x="23" y="78" width="6" height="2" fill="#9cdcfe"/><rect x="29" y="78" width="1" height="2" fill="#8a8a8a"/><rect x="7" y="80" width="9" height="2" fill="#569cd6"/><rect x="17" y="80" width="1" height="2" fill="#8a8a8a"/><rect x="18" y="80" width="7" height="2" fill="#4ec9b0"/><rect x="26" y="80" width="8" height="2" fill="#9cdcfe"/><rect x="34" y="80" width="1" height="2" fill="#8a8a8a"/><rect x="7" y="84" width="6" height="2" fill="#569cd6"/><rect x="14" y="84" width="8" height="2" fill="#569cd6"/><rect x="23" y="84" width="11" height="2" fill="#dcdcaa"/><rect x="34" y="84" width="1" height="2" fill="#da70d6"/><rect x="35" y="84" width="5" height="2" fill="#9cdcfe"/><rect x="41" y="84" width="1" height="2" fill="#8a8a8a"/><rect x="43" y="84" width="4" height="2" fill="#569cd6"/><rect x="47" y="84" width="1" height="2" fill="#8a8a8a"/><rect x="49" y="84" width="1" height="2" fill="#8a8a8a"/><rect x="50" y="84" width="15" height="2" fill="#4ec9b0"/><rect x="66" y="84" width="7" height="2" fill="#9cdcfe"/><rect x="74" y="84" width="1" height="2" fill="#8a8a8a"/><rect x="76" y="84" width="4" height="2" fill="#569cd6"/><rect x="80" y="84" width="1" height="2" fill="#da70d6"/><rect x="82" y="84" width="1" height="2" fill="#da70d6"/><rect x="11" y="86" width="6" height="2" fill="#569cd6"/><rect x="17" y="86" width="2" height="2" fill="#8a8a8a"/><rect x="19" y="86" width="11" height="2" fill="#dcdcaa"/><rect x="30" y="86" width="1" height="2" fill="#179fff"/><rect x="31" y="86" width="5" height="2" fill="#9cdcfe"/><rect x="36" y="86" width="1" height="2" fill="#8a8a8a"/><rect x="38" y="86" width="7" height="2" fill="#9cdcfe"/><rect x="45" y="86" width="1" height="2" fill="#179fff"/><rect x="46" y="86" width="1" height="2" fill="#8a8a8a"/><rect x="7" y="88" width="1" height="2" fill="#da70d6"/><rect x="7" y="92" width="6" height="2" fill="#569cd6"/><rect x="14" y="92" width="8" height="2" fill="#569cd6"/><rect x="23" y="92" width="5" height="2" fill="#dcdcaa"/><rect x="28" y="92" width="2" height="2" fill="#da70d6"/><rect x="30" y="92" width="1" height="2" fill="#8a8a8a"/><rect x="32" y="92" width="10" height="2" fill="#4ec9b0"/><rect x="43" y="92" width="1" height="2" fill="#da70d6"/><rect x="11" y="94" width="6" height="2" fill="#c586c0"/><rect x="18" y="94" width="5" height="2" fill="#569cd6"/><rect x="23" y="94" width="2" height="2" fill="#8a8a8a"/><rect x="25" y="94" width="2" height="2" fill="#9cdcfe"/><rect x="28" y="94" width="2" height="2" fill="#8a8a8a"/><rect x="31" y="94" width="5" height="2" fill="#8a8a8a"/><rect x="7" y="96" width="1" height="2" fill="#da70d6"/><rect x="7" y="100" width="6" height="2" fill="#569cd6"/><rect x="14" y="100" width="8" height="2" fill="#569cd6"/><rect x="23" y="100" width="17" height="2" fill="#dcdcaa"/><rect x="40" y="100" width="2" height="2" fill="#da70d6"/><rect x="42" y="100" width="1" height="2" fill="#8a8a8a"/><rect x="44" y="100" width="15" height="2" fill="#4ec9b0"/><rect x="60" y="100" width="1" height="2" fill="#da70d6"/><rect x="11" y="102" width="6" height="2" fill="#c586c0"/><rect x="18" y="102" width="5" height="2" fill="#569cd6"/><rect x="23" y="102" width="2" height="2" fill="#8a8a8a"/><rect x="25" y="102" width="14" height="2" fill="#9cdcfe"/><rect x="40" y="102" width="2" height="2" fill="#8a8a8a"/><rect x="43" y="102" width="5" height="2" fill="#8a8a8a"/><rect x="7" y="104" width="1" height="2" fill="#da70d6"/><rect x="7" y="108" width="6" height="2" fill="#569cd6"/><rect x="14" y="108" width="8" height="2" fill="#569cd6"/><rect x="23" y="108" width="14" height="2" fill="#dcdcaa"/><rect x="37" y="108" width="2" height="2" fill="#da70d6"/><rect x="39" y="108" width="1" height="2" fill="#8a8a8a"/><rect x="41" y="108" width="9" height="2" fill="#4ec9b0"/><rect x="51" y="108" width="1" height="2" fill="#da70d6"/><rect x="11" y="110" width="6" height="2" fill="#c586c0"/><rect x="18" y="110" width="5" height="2" fill="#569cd6"/><rect x="23" y="110" width="2" height="2" fill="#8a8a8a"/><rect x="25" y="110" width="11" height="2" fill="#9cdcfe"/><rect x="37" y="110" width="2" height="2" fill="#8a8a8a"/><rect x="40" y="110" width="5" height="2" fill="#8a8a8a"/><rect x="7" y="112" width="1" height="2" fill="#da70d6"/><rect x="7" y="116" width="6" height="2" fill="#569cd6"/><rect x="14" y="116" width="8" height="2" fill="#569cd6"/><rect x="23" y="116" width="14" height="2" fill="#dcdcaa"/><rect x="37" y="116" width="2" height="2" fill="#da70d6"/><rect x="39" y="116" width="1" height="2" fill="#8a8a8a"/><rect x="41" y="116" width="9" height="2" fill="#4ec9b0"/><rect x="51" y="116" width="1" height="2" fill="#da70d6"/><rect x="11" y="118" width="6" height="2" fill="#c586c0"/><rect x="18" y="118" width="5" height="2" fill="#569cd6"/><rect x="23" y="118" width="2" height="2" fill="#8a8a8a"/><rect x="25" y="118" width="11" height="2" fill="#9cdcfe"/><rect x="37" y="118" width="2" height="2" fill="#8a8a8a"/><rect x="40" y="118" width="5" height="2" fill="#8a8a8a"/><rect x="7" y="120" width="1" height="2" fill="#da70d6"/><rect x="7" y="124" width="6" height="2" fill="#569cd6"/><rect x="14" y="124" width="8" height="2" fill="#569cd6"/><rect x="23" y="124" width="10" height="2" fill="#dcdcaa"/><rect x="33" y="124" width="2" height="2" fill="#da70d6"/><rect x="35" y="124" width="1" height="2" fill="#8a8a8a"/><rect x="37" y="124" width="5" height="2" fill="#4ec9b0"/><rect x="43" y="124" width="1" height="2" fill="#da70d6"/><rect x="11" y="126" width="6" height="2" fill="#c586c0"/><rect x="18" y="126" width="5" height="2" fill="#569cd6"/><rect x="23" y="126" width="2" height="2" fill="#8a8a8a"/><rect x="25" y="126" width="8" height="2" fill="#9cdcfe"/><rect x="34" y="126" width="2" height="2" fill="#8a8a8a"/><rect x="37" y="126" width="5" height="2" fill="#8a8a8a"/><rect x="7" y="128" width="1" height="2" fill="#da70d6"/><rect x="7" y="132" width="6" height="2" fill="#569cd6"/><rect x="14" y="132" width="8" height="2" fill="#569cd6"/><rect x="23" y="132" width="8" height="2" fill="#dcdcaa"/><rect x="31" y="132" width="2" height="2" fill="#da70d6"/><rect x="33" y="132" width="1" height="2" fill="#8a8a8a"/><rect x="35" y="132" width="6" height="2" fill="#4ec9b0"/><rect x="42" y="132" width="1" height="2" fill="#da70d6"/><rect x="11" y="134" width="6" height="2" fill="#c586c0"/><rect x="18" y="134" width="5" height="2" fill="#569cd6"/><rect x="23" y="134" width="2" height="2" fill="#8a8a8a"/><rect x="25" y="134" width="5" height="2" fill="#9cdcfe"/><rect x="31" y="134" width="2" height="2" fill="#8a8a8a"/><rect x="34" y="134" width="5" height="2" fill="#8a8a8a"/><rect x="7" y="136" width="1" height="2" fill="#da70d6"/><rect x="7" y="140" width="6" height="2" fill="#569cd6"/><rect x="14" y="140" width="8" height="2" fill="#569cd6"/><rect x="23" y="140" width="14" height="2" fill="#dcdcaa"/><rect x="37" y="140" width="2" height="2" fill="#da70d6"/><rect x="39" y="140" width="1" height="2" fill="#8a8a8a"/><rect x="41" y="140" width="7" height="2" fill="#4ec9b0"/><rect x="49" y="140" width="1" height="2" fill="#da70d6"/><rect x="11" y="142" width="6" height="2" fill="#c586c0"/><rect x="18" y="142" width="5" height="2" fill="#569cd6"/><rect x="23" y="142" width="2" height="2" fill="#8a8a8a"/><rect x="25" y="142" width="11" height="2" fill="#9cdcfe"/><rect x="37" y="142" width="2" height="2" fill="#8a8a8a"/><rect x="40" y="142" width="5" height="2" fill="#8a8a8a"/><rect x="7" y="144" width="1" height="2" fill="#da70d6"/><rect x="7" y="148" width="6" height="2" fill="#569cd6"/><rect x="14" y="148" width="8" height="2" fill="#569cd6"/><rect x="23" y="148" width="7" height="2" fill="#dcdcaa"/><rect x="30" y="148" width="2" height="2" fill="#da70d6"/><rect x="32" y="148" width="1" height="2" fill="#8a8a8a"/><rect x="34" y="148" width="11" height="2" fill="#4ec9b0"/><rect x="46" y="148" width="1" height="2" fill="#da70d6"/><rect x="11" y="150" width="6" height="2" fill="#c586c0"/><rect x="18" y="150" width="5" height="2" fill="#569cd6"/><rect x="23" y="150" width="2" height="2" fill="#8a8a8a"/><rect x="25" y="150" width="4" height="2" fill="#9cdcfe"/><rect x="30" y="150" width="2" height="2" fill="#8a8a8a"/><rect x="33" y="150" width="5" height="2" fill="#8a8a8a"/><rect x="7" y="152" width="1" height="2" fill="#da70d6"/><rect x="7" y="156" width="6" height="2" fill="#569cd6"/><rect x="14" y="156" width="8" height="2" fill="#569cd6"/><rect x="23" y="156" width="16" height="2" fill="#dcdcaa"/><rect x="39" y="156" width="2" height="2" fill="#da70d6"/><rect x="41" y="156" width="1" height="2" fill="#8a8a8a"/><rect x="43" y="156" width="7" height="2" fill="#4ec9b0"/><rect x="51" y="156" width="1" height="2" fill="#da70d6"/><rect x="11" y="158" width="6" height="2" fill="#c586c0"/><rect x="18" y="158" width="5" height="2" fill="#569cd6"/><rect x="23" y="158" width="2" height="2" fill="#8a8a8a"/><rect x="25" y="158" width="13" height="2" fill="#9cdcfe"/><rect x="39" y="158" width="2" height="2" fill="#8a8a8a"/><rect x="42" y="158" width="5" height="2" fill="#8a8a8a"/><rect x="7" y="160" width="1" height="2" fill="#da70d6"/><rect x="7" y="164" width="6" height="2" fill="#569cd6"/><rect x="14" y="164" width="8" height="2" fill="#569cd6"/><rect x="23" y="164" width="7" height="2" fill="#dcdcaa"/><rect x="30" y="164" width="2" height="2" fill="#da70d6"/><rect x="32" y="164" width="1" height="2" fill="#8a8a8a"/><rect x="34" y="164" width="7" height="2" fill="#4ec9b0"/><rect x="42" y="164" width="1" height="2" fill="#da70d6"/><rect x="11" y="166" width="6" height="2" fill="#c586c0"/><rect x="18" y="166" width="5" height="2" fill="#569cd6"/><rect x="23" y="166" width="2" height="2" fill="#8a8a8a"/><rect x="25" y="166" width="4" height="2" fill="#9cdcfe"/><rect x="30" y="166" width="2" height="2" fill="#8a8a8a"/><rect x="33" y="166" width="5" height="2" fill="#8a8a8a"/><rect x="7" y="168" width="1" height="2" fill="#da70d6"/><rect x="7" y="172" width="6" height="2" fill="#569cd6"/><rect x="14" y="172" width="8" height="2" fill="#569cd6"/><rect x="23" y="172" width="7" height="2" fill="#dcdcaa"/><rect x="30" y="172" width="2" height="2" fill="#da70d6"/><rect x="32" y="172" width="1" height="2" fill="#8a8a8a"/><rect x="34" y="172" width="7" height="2" fill="#4ec9b0"/><rect x="42" y="172" width="1" height="2" fill="#da70d6"/><rect x="11" y="174" width="6" height="2" fill="#c586c0"/><rect x="18" y="174" width="5" height="2" fill="#569cd6"/><rect x="23" y="174" width="2" height="2" fill="#8a8a8a"/><rect x="25" y="174" width="4" height="2" fill="#9cdcfe"/><rect x="30" y="174" width="2" height="2" fill="#8a8a8a"/><rect x="33" y="174" width="5" height="2" fill="#8a8a8a"/><rect x="7" y="176" width="1" height="2" fill="#da70d6"/><rect x="7" y="180" width="6" height="2" fill="#569cd6"/><rect x="14" y="180" width="8" height="2" fill="#569cd6"/><rect x="23" y="180" width="11" height="2" fill="#dcdcaa"/><rect x="34" y="180" width="2" height="2" fill="#da70d6"/><rect x="36" y="180" width="1" height="2" fill="#8a8a8a"/><rect x="38" y="180" width="6" height="2" fill="#4ec9b0"/><rect x="45" y="180" width="1" height="2" fill="#da70d6"/><rect x="11" y="182" width="6" height="2" fill="#c586c0"/><rect x="18" y="182" width="5" height="2" fill="#569cd6"/><rect x="23" y="182" width="2" height="2" fill="#8a8a8a"/><rect x="25" y="182" width="8" height="2" fill="#9cdcfe"/><rect x="34" y="182" width="2" height="2" fill="#8a8a8a"/><rect x="37" y="182" width="5" height="2" fill="#8a8a8a"/><rect x="7" y="184" width="1" height="2" fill="#da70d6"/><rect x="7" y="188" width="6" height="2" fill="#569cd6"/><rect x="14" y="188" width="8" height="2" fill="#569cd6"/><rect x="23" y="188" width="8" height="2" fill="#dcdcaa"/><rect x="31" y="188" width="2" height="2" fill="#da70d6"/><rect x="33" y="188" width="1" height="2" fill="#8a8a8a"/><rect x="35" y="188" width="5" height="2" fill="#4ec9b0"/><rect x="41" y="188" width="1" height="2" fill="#da70d6"/><rect x="11" y="190" width="6" height="2" fill="#c586c0"/><rect x="18" y="190" width="5" height="2" fill="#569cd6"/><rect x="23" y="190" width="2" height="2" fill="#8a8a8a"/><rect x="25" y="190" width="5" height="2" fill="#9cdcfe"/><rect x="31" y="190" width="2" height="2" fill="#8a8a8a"/><rect x="34" y="190" width="5" height="2" fill="#8a8a8a"/><rect x="7" y="192" width="1" height="2" fill="#da70d6"/><rect x="7" y="196" width="6" height="2" fill="#569cd6"/><rect x="14" y="196" width="8" height="2" fill="#569cd6"/><rect x="23" y="196" width="10" height="2" fill="#dcdcaa"/><rect x="33" y="196" width="2" height="2" fill="#da70d6"/><rect x="35" y="196" width="1" height="2" fill="#8a8a8a"/><rect x="37" y="196" width="8" height="2" fill="#4ec9b0"/><rect x="46" y="196" width="1" height="2" fill="#da70d6"/><rect x="11" y="198" width="6" height="2" fill="#c586c0"/><rect x="18" y="198" width="5" height="2" fill="#569cd6"/><rect x="23" y="198" width="2" height="2" fill="#8a8a8a"/><rect x="25" y="198" width="7" height="2" fill="#9cdcfe"/><rect x="33" y="198" width="2" height="2" fill="#8a8a8a"/><rect x="36" y="198" width="5" height="2" fill="#8a8a8a"/><rect x="7" y="200" width="1" height="2" fill="#da70d6"/><rect x="7" y="204" width="6" height="2" fill="#569cd6"/><rect x="14" y="204" width="8" height="2" fill="#569cd6"/><rect x="23" y="204" width="5" height="2" fill="#dcdcaa"/><rect x="28" y="204" width="1" height="2" fill="#da70d6"/><rect x="29" y="204" width="9" height="2" fill="#9cdcfe"/><rect x="39" y="204" width="3" height="2" fill="#9cdcfe"/><rect x="42" y="204" width="1" height="2" fill="#da70d6"/><rect x="43" y="204" width="1" height="2" fill="#8a8a8a"/><rect x="45" y="204" width="4" height="2" fill="#569cd6"/><rect x="50" y="204" width="1" height="2" fill="#da70d6"/><rect x="11" y="206" width="7" height="2" fill="#569cd6"/><rect x="18" y="206" width="2" height="2" fill="#9cdcfe"/><rect x="21" y="206" width="1" height="2" fill="#8a8a8a"/><rect x="23" y="206" width="3" height="2" fill="#9cdcfe"/><rect x="26" y="206" width="1" height="2" fill="#8a8a8a"/><rect x="7" y="208" width="1" height="2" fill="#da70d6"/><rect x="7" y="212" width="6" height="2" fill="#569cd6"/><rect x="14" y="212" width="8" height="2" fill="#569cd6"/><rect x="23" y="212" width="17" height="2" fill="#dcdcaa"/><rect x="40" y="212" width="1" height="2" fill="#da70d6"/><rect x="41" y="212" width="14" height="2" fill="#9cdcfe"/><rect x="56" y="212" width="15" height="2" fill="#9cdcfe"/><rect x="71" y="212" width="1" height="2" fill="#da70d6"/><rect x="72" y="212" width="1" height="2" fill="#8a8a8a"/><rect x="74" y="212" width="4" height="2" fill="#569cd6"/><rect x="79" y="212" width="1" height="2" fill="#da70d6"/><rect x="11" y="214" width="7" height="2" fill="#569cd6"/><rect x="18" y="214" width="14" height="2" fill="#9cdcfe"/><rect x="33" y="214" width="1" height="2" fill="#8a8a8a"/><rect x="35" y="214" width="15" height="2" fill="#9cdcfe"/><rect x="50" y="214" width="1" height="2" fill="#8a8a8a"/><rect x="7" y="216" width="1" height="2" fill="#da70d6"/><rect x="7" y="220" width="6" height="2" fill="#569cd6"/><rect x="14" y="220" width="8" height="2" fill="#569cd6"/><rect x="23" y="220" width="8" height="2" fill="#dcdcaa"/><rect x="31" y="220" width="1" height="2" fill="#da70d6"/><rect x="32" y="220" width="6" height="2" fill="#9cdcfe"/><rect x="39" y="220" width="6" height="2" fill="#9cdcfe"/><rect x="45" y="220" width="1" height="2" fill="#da70d6"/><rect x="46" y="220" width="1" height="2" fill="#8a8a8a"/><rect x="48" y="220" width="4" height="2" fill="#569cd6"/><rect x="53" y="220" width="1" height="2" fill="#da70d6"/><rect x="11" y="222" width="7" height="2" fill="#569cd6"/><rect x="18" y="222" width="5" height="2" fill="#9cdcfe"/><rect x="24" y="222" width="1" height="2" fill="#8a8a8a"/><rect x="26" y="222" width="6" height="2" fill="#9cdcfe"/><rect x="32" y="222" width="1" height="2" fill="#8a8a8a"/><rect x="7" y="224" width="1" height="2" fill="#da70d6"/><rect x="7" y="228" width="6" height="2" fill="#569cd6"/><rect x="14" y="228" width="8" height="2" fill="#569cd6"/><rect x="23" y="228" width="14" height="2" fill="#dcdcaa"/><rect x="37" y="228" width="1" height="2" fill="#da70d6"/><rect x="38" y="228" width="6" height="2" fill="#9cdcfe"/><rect x="45" y="228" width="12" height="2" fill="#9cdcfe"/><rect x="57" y="228" width="1" height="2" fill="#da70d6"/><rect x="58" y="228" width="1" height="2" fill="#8a8a8a"/><rect x="60" y="228" width="4" height="2" fill="#569cd6"/><rect x="65" y="228" width="1" height="2" fill="#da70d6"/><rect x="11" y="230" width="7" height="2" fill="#569cd6"/><rect x="18" y="230" width="11" height="2" fill="#9cdcfe"/><rect x="30" y="230" width="1" height="2" fill="#8a8a8a"/><rect x="32" y="230" width="12" height="2" fill="#9cdcfe"/><rect x="44" y="230" width="1" height="2" fill="#8a8a8a"/><rect x="7" y="232" width="1" height="2" fill="#da70d6"/><rect x="7" y="236" width="6" height="2" fill="#569cd6"/><rect x="14" y="236" width="8" height="2" fill="#569cd6"/><rect x="23" y="236" width="7" height="2" fill="#dcdcaa"/><rect x="30" y="236" width="1" height="2" fill="#da70d6"/><rect x="31" y="236" width="11" height="2" fill="#9cdcfe"/><rect x="43" y="236" width="5" height="2" fill="#9cdcfe"/><rect x="48" y="236" width="1" height="2" fill="#da70d6"/><rect x="49" y="236" width="1" height="2" fill="#8a8a8a"/><rect x="51" y="236" width="4" height="2" fill="#569cd6"/><rect x="56" y="236" width="1" height="2" fill="#da70d6"/><rect x="11" y="238" width="7" height="2" fill="#569cd6"/><rect x="18" y="238" width="4" height="2" fill="#9cdcfe"/><rect x="23" y="238" width="1" height="2" fill="#8a8a8a"/><rect x="25" y="238" width="5" height="2" fill="#9cdcfe"/><rect x="30" y="238" width="1" height="2" fill="#8a8a8a"/><rect x="7" y="240" width="1" height="2" fill="#da70d6"/><rect x="7" y="244" width="6" height="2" fill="#569cd6"/><rect x="14" y="244" width="8" height="2" fill="#569cd6"/><rect x="23" y="244" width="16" height="2" fill="#dcdcaa"/><rect x="39" y="244" width="1" height="2" fill="#da70d6"/><rect x="40" y="244" width="6" height="2" fill="#9cdcfe"/><rect x="47" y="244" width="14" height="2" fill="#9cdcfe"/><rect x="61" y="244" width="1" height="2" fill="#da70d6"/><rect x="62" y="244" width="1" height="2" fill="#8a8a8a"/><rect x="64" y="244" width="4" height="2" fill="#569cd6"/><rect x="69" y="244" width="1" height="2" fill="#da70d6"/><rect x="11" y="246" width="7" height="2" fill="#569cd6"/><rect x="18" y="246" width="13" height="2" fill="#9cdcfe"/><rect x="32" y="246" width="1" height="2" fill="#8a8a8a"/><rect x="34" y="246" width="14" height="2" fill="#9cdcfe"/><rect x="48" y="246" width="1" height="2" fill="#8a8a8a"/><rect x="7" y="248" width="1" height="2" fill="#da70d6"/><rect x="7" y="252" width="6" height="2" fill="#569cd6"/><rect x="14" y="252" width="8" height="2" fill="#569cd6"/><rect x="23" y="252" width="7" height="2" fill="#dcdcaa"/><rect x="30" y="252" width="1" height="2" fill="#da70d6"/><rect x="31" y="252" width="6" height="2" fill="#9cdcfe"/><rect x="38" y="252" width="5" height="2" fill="#9cdcfe"/><rect x="43" y="252" width="1" height="2" fill="#da70d6"/><rect x="44" y="252" width="1" height="2" fill="#8a8a8a"/><rect x="46" y="252" width="4" height="2" fill="#569cd6"/><rect x="51" y="252" width="1" height="2" fill="#da70d6"/><rect x="11" y="254" width="7" height="2" fill="#569cd6"/><rect x="18" y="254" width="4" height="2" fill="#9cdcfe"/><rect x="23" y="254" width="1" height="2" fill="#8a8a8a"/><rect x="25" y="254" width="5" height="2" fill="#9cdcfe"/><rect x="30" y="254" width="1" height="2" fill="#8a8a8a"/><rect x="7" y="256" width="1" height="2" fill="#da70d6"/><rect x="7" y="260" width="6" height="2" fill="#569cd6"/><rect x="14" y="260" width="8" height="2" fill="#569cd6"/><rect x="23" y="260" width="7" height="2" fill="#dcdcaa"/><rect x="30" y="260" width="1" height="2" fill="#da70d6"/><rect x="31" y="260" width="6" height="2" fill="#9cdcfe"/><rect x="38" y="260" width="5" height="2" fill="#9cdcfe"/><rect x="43" y="260" width="1" height="2" fill="#da70d6"/><rect x="44" y="260" width="1" height="2" fill="#8a8a8a"/><rect x="46" y="260" width="4" height="2" fill="#569cd6"/><rect x="51" y="260" width="1" height="2" fill="#da70d6"/><rect x="11" y="262" width="7" height="2" fill="#569cd6"/><rect x="18" y="262" width="4" height="2" fill="#9cdcfe"/><rect x="23" y="262" width="1" height="2" fill="#8a8a8a"/><rect x="25" y="262" width="5" height="2" fill="#9cdcfe"/><rect x="30" y="262" width="1" height="2" fill="#8a8a8a"/><rect x="7" y="264" width="1" height="2" fill="#da70d6"/><rect x="7" y="268" width="6" height="2" fill="#569cd6"/><rect x="14" y="268" width="8" height="2" fill="#569cd6"/><rect x="23" y="268" width="11" height="2" fill="#dcdcaa"/><rect x="34" y="268" width="1" height="2" fill="#da70d6"/><rect x="35" y="268" width="6" height="2" fill="#9cdcfe"/><rect x="42" y="268" width="9" height="2" fill="#9cdcfe"/><rect x="51" y="268" width="1" height="2" fill="#da70d6"/><rect x="52" y="268" width="1" height="2" fill="#8a8a8a"/><rect x="54" y="268" width="4" height="2" fill="#569cd6"/><rect x="59" y="268" width="1" height="2" fill="#da70d6"/><rect x="11" y="270" width="7" height="2" fill="#569cd6"/><rect x="18" y="270" width="8" height="2" fill="#9cdcfe"/><rect x="27" y="270" width="1" height="2" fill="#8a8a8a"/><rect x="29" y="270" width="9" height="2" fill="#9cdcfe"/><rect x="38" y="270" width="1" height="2" fill="#8a8a8a"/><rect x="7" y="272" width="1" height="2" fill="#da70d6"/><rect x="7" y="276" width="6" height="2" fill="#569cd6"/><rect x="14" y="276" width="8" height="2" fill="#569cd6"/><rect x="23" y="276" width="8" height="2" fill="#dcdcaa"/><rect x="31" y="276" width="1" height="2" fill="#da70d6"/><rect x="32" y="276" width="5" height="2" fill="#9cdcfe"/><rect x="38" y="276" width="6" height="2" fill="#9cdcfe"/><rect x="44" y="276" width="1" height="2" fill="#da70d6"/><rect x="45" y="276" width="1" height="2" fill="#8a8a8a"/><rect x="47" y="276" width="4" height="2" fill="#569cd6"/><rect x="52" y="276" width="1" height="2" fill="#da70d6"/><rect x="11" y="278" width="7" height="2" fill="#569cd6"/><rect x="18" y="278" width="5" height="2" fill="#9cdcfe"/><rect x="24" y="278" width="1" height="2" fill="#8a8a8a"/><rect x="26" y="278" width="6" height="2" fill="#9cdcfe"/><rect x="32" y="278" width="1" height="2" fill="#8a8a8a"/><rect x="7" y="280" width="1" height="2" fill="#da70d6"/><rect x="3" y="282" width="1" height="2" fill="#ffd700"/></g></svg>
<div class="a" style="left:2546px;top:93px;width:1px;height:612px;background:#2a2a2a"></div>
<div class="a" style="left:2547px;top:147px;width:5px;height:112px;background:#434343"></div>
<div class="a" style="left:2547px;top:93px;width:5px;height:2px;background:#a0a0a0"></div>
<div class="a" style="left:461px;top:705px;width:2091px;height:323px;background:#181818"></div>
<div class="a" style="left:461px;top:705px;width:2091px;height:1px;background:#2b2b2b"></div>
<div class="t" style="left:481px;top:712px;font-size:11px;color:#9d9d9d;transform:scaleX(0.8764);transform-origin:0 0">PROBLEMS</div>
<div class="t" style="left:558.5px;top:712px;font-size:11px;color:#9d9d9d;transform:scaleX(0.8956);transform-origin:0 0">OUTPUT</div>
<div class="t" style="left:624.3px;top:712px;font-size:11px;color:#9d9d9d;transform:scaleX(0.8823);transform-origin:0 0">DEBUG CONSOLE</div>
<div class="t" style="left:734px;top:712px;font-size:11px;color:#e7e7e7;transform:scaleX(0.9097);transform-origin:0 0">TERMINAL</div>
<div class="t" style="left:809px;top:712px;font-size:11px;color:#9d9d9d;transform:scaleX(0.8222);transform-origin:0 0">PORTS</div>
<div class="t" style="left:865px;top:712px;font-size:11px;color:#9d9d9d;transform:scaleX(0.8621);transform-origin:0 0">GITLENS</div>
<div class="t" style="left:930px;top:712px;font-size:11px;color:#9d9d9d;transform:scaleX(0.9290);transform-origin:0 0">COMMENTS</div>
<div class="a" style="left:731px;top:734px;width:56px;height:1px;background:#0078d4"></div>
<svg style="left:2330px;top:716px" width="17" height="16" viewBox="0 0 17 16"><g stroke="#cccccc" stroke-width="1.1" fill="none"><path d="M3.5 1.5H15.5L13.5 14.5H1.5Z"/><path d="M5 5L8 7.5 5 10M8.5 11H11.5"/></g></svg>
<div class="t" style="left:2351px;top:712px;color:#cccccc;letter-spacing:-1.1px">pwsh</div>
<svg style="left:2386px;top:716px" width="15" height="15" viewBox="0 0 15 15"><g stroke="#cccccc" stroke-width="1.2" fill="none"><path d="M7.5 1V14.5M1 7.5H14.5"/></g></svg>
<svg style="left:2405px;top:720px" width="10" height="7" viewBox="0 0 10 7"><g stroke="#cccccc" stroke-width="1.1" fill="none"><path d="M1 1.5L5 5.5 9 1.5"/></g></svg>
<svg style="left:2426px;top:716px" width="15" height="15" viewBox="0 0 15 15"><g stroke="#cccccc" stroke-width="1.1" fill="none"><rect x="1" y="1" width="13" height="13" rx="1"/><path d="M7.5 1V14"/></g></svg>
<svg style="left:2452px;top:716px" width="13" height="15" viewBox="0 0 13 15"><g stroke="#cccccc" stroke-width="1.1" fill="none"><path d="M1 3.5H12M4.5 3.5V1.5H8.5V3.5M2.5 3.5L3 14H10L10.5 3.5M5 6V12M8 6V12"/></g></svg>
<div class="a" style="left:2478px;top:723px;width:2px;height:2px;background:#cccccc"></div>
<div class="a" style="left:2483px;top:723px;width:2px;height:2px;background:#cccccc"></div>
<div class="a" style="left:2488px;top:723px;width:2px;height:2px;background:#cccccc"></div>
<svg style="left:2505px;top:719px" width="12" height="8" viewBox="0 0 12 8"><g stroke="#cccccc" stroke-width="1.1" fill="none"><path d="M1 6.5L6 1.5 11 6.5"/></g></svg>
<svg style="left:2531px;top:718px" width="11" height="10" viewBox="0 0 11 10"><g stroke="#cccccc" stroke-width="1.2" fill="none"><path d="M1 0.5L10 9.5M10 0.5L1 9.5"/></g></svg>
<div class="term" style="left:481px;top:756px;color:#cccccc;padding-top:1px">PS C:\Users\SchuppeliusD\source\repos\lexoffice-php-sdk&gt;</div>
<div class="a" style="left:481px;top:773px;width:21px;height:17px;background:#cccccc"></div>
<div class="a" style="left:502px;top:773px;width:126px;height:17px;background:#3b8eea"></div>
<div class="term" style="left:481px;top:773px;color:#cccccc;padding-top:1px"><span style="color:#1a1a1a"> * </span><span style="color:#1e2a44"> History restored </span></div>
<div class="term" style="left:481px;top:807px;color:#cccccc;padding-top:1px">PS C:\Users\SchuppeliusD\source\repos\lexoffice-php-sdk&gt;</div>
<div class="a" style="left:481px;top:824px;width:21px;height:17px;background:#cccccc"></div>
<div class="a" style="left:502px;top:824px;width:126px;height:17px;background:#3b8eea"></div>
<div class="term" style="left:481px;top:824px;color:#cccccc;padding-top:1px"><span style="color:#1a1a1a"> * </span><span style="color:#1e2a44"> History restored </span></div>
<div class="term" style="left:481px;top:858px;color:#cccccc;padding-top:1px">PS C:\Users\SchuppeliusD\source\repos\lexoffice-php-sdk&gt;</div>
<svg style="left:466px;top:861px" width="10" height="10" viewBox="0 0 10 10"><circle cx="5" cy="5" r="3.6" stroke="#6e6e6e" stroke-width="1.8" fill="none"/></svg>
<div class="a" style="left:2546px;top:757px;width:1px;height:271px;background:#2a2a2a"></div>
<div class="a" style="left:2547px;top:852px;width:5px;height:12px;background:#5a5a5a"></div>
<div class="a" style="left:0;top:1028px;width:2552px;height:14px;background:#181818"></div>
<div class="a" style="left:0;top:1028px;width:2552px;height:1px;background:#2b2b2b"></div>
<div class="a" style="left:0;top:1029px;width:34px;height:13px;background:#0078d4"></div>
<svg style="left:9px;top:1030px" width="16" height="16" viewBox="0 0 16 16"><path d="M11.5 1.5L7 5 11.5 8.5M3 6.5L7.5 10 3 13.5" stroke="#ffffff" stroke-width="1.2" fill="none"/></svg>
<svg style="left:41px;top:1032px" width="16" height="16" viewBox="0 0 16 16"><g stroke="#cccccc" stroke-width="1.1" fill="none"><circle cx="3.5" cy="2.5" r="1.8"/><circle cx="10" cy="5.5" r="1.8"/><path d="M3.5 4.3V14M10 7.3C10 9.5 8 10 3.5 11"/></g></svg>
<div class="t" style="left:58px;top:1029px;color:#cccccc;font-size:12px">main</div>
<svg style="left:88px;top:1032px" width="16" height="16" viewBox="0 0 16 16"><g stroke="#cccccc" stroke-width="1.1" fill="none"><path d="M2 8A6 6 0 0 1 13 5M14 8A6 6 0 0 1 3 11M13 1.5V5H9.5M3 14.5V11H6.5"/></g></svg>
<div class="t" style="left:106px;top:1029px;color:#cccccc;font-size:12px">4↓ 0↑</div>
<svg style="left:148px;top:1032px" width="16" height="16" viewBox="0 0 16 16"><g stroke="#cccccc" stroke-width="1.1" fill="none"><circle cx="3.5" cy="3" r="1.8"/><path d="M3.5 4.8V14M10 3V14M7.5 7L10 4.5 12.5 7"/></g></svg>
<svg style="left:178px;top:1032px" width="16" height="16" viewBox="0 0 16 16"><g stroke="#cccccc" stroke-width="1.1" fill="none"><path d="M2 14L5 10M4 6.5C7 2.5 10 1.5 14 2C14.5 6 13.5 9 9.5 12L7 12.5 3.5 9Z"/></g></svg>
<svg style="left:193px;top:1032px" width="16" height="16" viewBox="0 0 16 16"><g stroke="#cccccc" stroke-width="1.1" fill="none"><path d="M6.5 9.5L9.5 6.5M5 8L3 10C2 11 2 13 3 14S6 15 7 14L9 12M8 5L10 3C11 2 13 2 14 3S15 6 14 7L12 9"/></g></svg>
<div class="t" style="left:210px;top:1029px;color:#cccccc;font-size:12px">Launchpad</div>
<svg style="left:284px;top:1032px" width="13" height="16" viewBox="0 0 13 16"><g stroke="#cccccc" stroke-width="1.1" fill="none"><circle cx="6" cy="8" r="5.5"/><path d="M4 6L8 10M8 6L4 10"/></g></svg>
<div class="t" style="left:300px;top:1029px;color:#cccccc;font-size:12px">0</div>
<svg style="left:311px;top:1032px" width="14" height="16" viewBox="0 0 14 16"><g stroke="#cccccc" stroke-width="1.1" fill="none"><path d="M7 2L13 14H1Z"/><path d="M7 6V10"/></g></svg>
<div class="t" style="left:328px;top:1029px;color:#cccccc;font-size:12px">0</div>
<svg style="left:351px;top:1032px" width="14" height="16" viewBox="0 0 14 16"><g stroke="#cccccc" stroke-width="1.1" fill="none"><circle cx="7" cy="7" r="1.5"/><path d="M7 8.5V15M4 11L7 8.5 10 11M3.5 3A5 5 0 0 0 3.5 11M10.5 3A5 5 0 0 1 10.5 11"/></g></svg>
<div class="t" style="left:366px;top:1029px;color:#cccccc;font-size:12px">0</div>
<div class="t" style="left:390px;top:1029px;color:#cccccc;font-size:12px">Git Graph</div>
<svg style="left:1797px;top:1032px" width="16" height="16" viewBox="0 0 16 16"><g stroke="#cccccc" stroke-width="1.1" fill="none"><path d="M3 14L12 5M11 3L14 6M6 14C9 14 13 11 13 8M2 2.5L4 4.5M2.5 4.5L4 2.5"/></g></svg>
<div class="t" style="left:1816px;top:1029px;color:#cccccc;font-size:12px">Duo</div>
<svg style="left:1853px;top:1032px" width="16" height="16" viewBox="0 0 16 16"><g stroke="#cccccc" stroke-width="1.1" fill="none"><circle cx="8" cy="9" r="3"/><path d="M8 1V6M8 12V16"/></g></svg>
<div class="t" style="left:1872px;top:1029px;color:#cccccc;font-size:12px">Daniel Jörg Schuppelius, 4 months ago</div>
<div class="t" style="left:2093px;top:1029px;color:#cccccc;font-size:12px">Ln 1, Col 1</div>
<div class="t" style="left:2164px;top:1029px;color:#cccccc;font-size:12px">Spaces: 4</div>
<div class="t" style="left:2229px;top:1029px;color:#cccccc;font-size:12px">UTF-8</div>
<div class="t" style="left:2277px;top:1029px;color:#cccccc;font-size:12px">CRLF</div>
<div class="t" style="left:2319px;top:1029px;color:#cccccc;font-size:12px">PHP</div>
<svg style="left:2357px;top:1032px" width="13" height="16" viewBox="0 0 13 16"><g stroke="#cccccc" stroke-width="1.1" fill="none"><circle cx="6" cy="6" r="5"/><circle cx="6" cy="6" r="2"/><path d="M6 8V15"/></g></svg>
<div class="t" style="left:2374px;top:1029px;color:#cccccc;font-size:12px">Go Live</div>
<svg style="left:2428px;top:1032px" width="16" height="16" viewBox="0 0 16 16"><g stroke="#cccccc" stroke-width="1.1" fill="none"><rect x="2" y="2" width="5" height="5" rx="1.5"/><rect x="8" y="2" width="5" height="5" rx="1.5"/><path d="M2 8V12C4 14 11 14 13 12V8"/></g></svg>
<svg style="left:2459px;top:1032px" width="13" height="16" viewBox="0 0 13 16"><g stroke="#cccccc" stroke-width="1.1" fill="none"><circle cx="6" cy="8" r="5.5"/><path d="M2.5 12L10 4"/></g></svg>
<div class="t" style="left:2477px;top:1029px;color:#cccccc;font-size:12px">Prettier</div>
<svg style="left:2532px;top:1032px" width="14" height="16" viewBox="0 0 14 16"><g stroke="#cccccc" stroke-width="1.1" fill="none"><path d="M2 14V8C2 5 4 3 7 3S12 5 12 8V14"/><circle cx="11" cy="3" r="1.8" fill="#cccccc"/></g></svg>
</body></html>
